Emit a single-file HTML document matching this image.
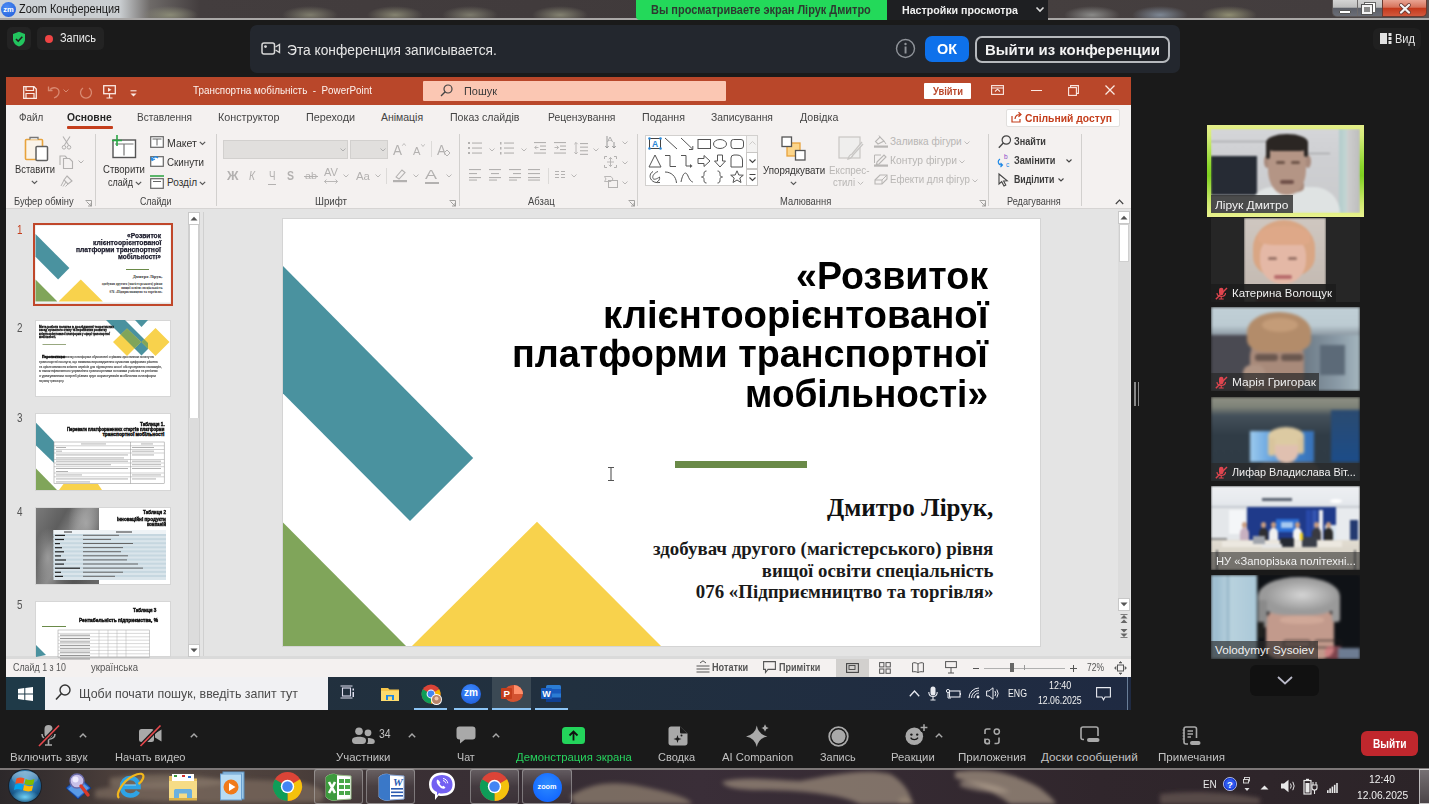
<!DOCTYPE html>
<html><head><meta charset="utf-8">
<style>
*{margin:0;padding:0;box-sizing:border-box}
html,body{width:1429px;height:804px;overflow:hidden;background:#1a1a1a;font-family:"Liberation Sans",sans-serif;position:relative}
.a{position:absolute;display:block}
.t{position:absolute;white-space:pre}
svg.a{overflow:visible}
</style></head><body>

<div class="a" style="left:0px;top:20px;width:1429px;height:748px;background:#1a1a1a"></div>
<div class="a" style="left:0px;top:0px;width:1429px;height:19px;background:radial-gradient(ellipse 28px 9px at 170px 15px,#8a8a76,rgba(0,0,0,0)),radial-gradient(ellipse 28px 9px at 310px 15px,#7e7c6c,rgba(0,0,0,0)),radial-gradient(ellipse 28px 9px at 395px 15px,#858370,rgba(0,0,0,0)),radial-gradient(ellipse 28px 9px at 470px 15px,#7c7a6c,rgba(0,0,0,0)),radial-gradient(ellipse 28px 9px at 560px 15px,#838170,rgba(0,0,0,0)),radial-gradient(ellipse 28px 9px at 1092px 15px,#8a8a88,rgba(0,0,0,0)),radial-gradient(ellipse 28px 9px at 1160px 15px,#7d8794,rgba(0,0,0,0)),radial-gradient(ellipse 28px 9px at 1229px 15px,#8f8d72,rgba(0,0,0,0)),linear-gradient(90deg,#cfd3d6 0,#c9cdd0 120px,#6e6a68 150px,#433d3e 200px,#403a3b 700px,#453f3f 1040px,#433d3e 1330px,#5a5555 1429px)"></div>
<div class="a" style="left:0px;top:18px;width:1429px;height:2px;background:#a9a7a6"></div>
<div class="a" style="left:1px;top:2px;width:15px;height:15px;border-radius:50%;background:radial-gradient(circle at 40% 35%,#4f8df5,#1c5ad8)"></div>
<div class="t" style="left:3.20px;top:6.10px;font:700 7.56px/7.56px 'Liberation Sans',sans-serif;color:#fff;">zm</div>
<div class="t" style="left:19.00px;top:3.32px;font:400 12.85px/12.85px 'Liberation Sans',sans-serif;color:#1a1a1a;transform:scaleX(0.8506);transform-origin:0 0;">Zoom Конференция</div>
<div class="a" style="left:636px;top:0px;width:251px;height:20px;background:#23d95a;border-radius:0 0 0 4px"></div>
<div class="t" style="left:651.00px;top:3.83px;font:700 12.01px/12.01px 'Liberation Sans',sans-serif;color:#2d3a30;transform:scaleX(0.9141);transform-origin:0 0;">Вы просматриваете экран Лірук Дмитро</div>
<div class="a" style="left:887px;top:0px;width:161px;height:20px;background:#1e1f22"></div>
<div class="t" style="left:902.00px;top:4.07px;font:700 11.73px/11.73px 'Liberation Sans',sans-serif;color:#f0f0f0;transform:scaleX(0.9078);transform-origin:0 0;">Настройки просмотра</div>
<svg class="a" style="left:1035px;top:6px;" width="10" height="7" viewBox="0 0 10 7"><path d="M1.5 1.5 L5 5 L8.5 1.5" stroke="#ddd" stroke-width="1.6" fill="none"/></svg>
<div class="a" style="left:1332px;top:0px;width:95px;height:17px;border:1px solid #5b5656;border-top:none;border-radius:0 0 5px 5px;background:linear-gradient(180deg,#d4d4d4 0,#bdbdbd 45%,#5c5f68 52%,#6a6d76 100%);overflow:hidden"></div>
<div class="a" style="left:1357px;top:0px;width:1px;height:16px;background:#6d6a6a"></div>
<div class="a" style="left:1382px;top:0px;width:45px;height:17px;border-radius:0 0 5px 0;background:linear-gradient(180deg,#e9a493 0,#d7735c 45%,#c4391c 52%,#d2583d 100%);border:1px solid #6a3a30;border-top:none"></div>
<div class="a" style="left:1339px;top:10px;width:12px;height:4px;background:#fff;border:1px solid #555;border-radius:1px"></div>
<div class="a" style="left:1365px;top:3px;width:10px;height:9px;border:2px solid #fff;outline:1px solid #666"></div>
<div class="a" style="left:1362px;top:5px;width:10px;height:9px;border:2px solid #f4f4f4;background:#8a8a8a;outline:1px solid #555"></div>
<svg class="a" style="left:1397px;top:2px;" width="16" height="13" viewBox="0 0 16 13"><path d="M4 3 L12 10.5 M12 3 L4 10.5" stroke="#6a3a34" stroke-width="3.8" stroke-linecap="round"/><path d="M4 3 L12 10.5 M12 3 L4 10.5" stroke="#f4f4f4" stroke-width="2.3" stroke-linecap="round"/></svg>
<div class="a" style="left:7px;top:27px;width:24px;height:23px;background:#232323;border-radius:5px"></div>
<svg class="a" style="left:12px;top:31px;" width="14" height="16" viewBox="0 0 14 16"><path d="M7 0.8 L13 3 L13 8 C13 12 10 14.5 7 15.5 C4 14.5 1 12 1 8 L1 3 Z" fill="#22c55e"/><path d="M4 8 L6.2 10.2 L10.3 5.8" stroke="#1f1f1f" stroke-width="1.6" fill="none"/></svg>
<div class="a" style="left:37px;top:27px;width:67px;height:23px;background:#232323;border-radius:5px"></div>
<div class="a" style="left:44.5px;top:34.5px;width:8px;height:8px;background:#ef4444;border-radius:50%"></div>
<div class="t" style="left:60.00px;top:32.95px;font:400 11.87px/11.87px 'Liberation Sans',sans-serif;color:#ececec;transform:scaleX(0.9242);transform-origin:0 0;">Запись</div>
<div class="a" style="left:250px;top:25px;width:930px;height:48px;background:#23272e;border-radius:7px"></div>
<svg class="a" style="left:261px;top:42px;" width="20" height="14" viewBox="0 0 20 14"><rect x="1" y="1" width="12.5" height="11" rx="2" stroke="#d8d8d8" stroke-width="1.5" fill="none"/><circle cx="4.5" cy="4.6" r="1.4" fill="#d8d8d8"/><path d="M14.5 5 L18.5 2.5 L18.5 10.5 L14.5 8" stroke="#d8d8d8" stroke-width="1.4" fill="none"/></svg>
<div class="t" style="left:287.00px;top:42.89px;font:400 14.66px/14.66px 'Liberation Sans',sans-serif;color:#e6e6e6;transform:scaleX(0.9390);transform-origin:0 0;">Эта конференция записывается.</div>
<svg class="a" style="left:895px;top:38px;" width="21" height="21" viewBox="0 0 21 21"><circle cx="10.5" cy="10.5" r="9" stroke="#8f9399" stroke-width="1.4" fill="none"/><rect x="9.6" y="8.5" width="1.9" height="7" fill="#8f9399"/><circle cx="10.5" cy="6" r="1.2" fill="#8f9399"/></svg>
<div class="a" style="left:925px;top:36px;width:44px;height:26px;background:#0e71eb;border-radius:7px"></div>
<div class="t" style="left:937.00px;top:41.00px;font:700 15.36px/15.36px 'Liberation Sans',sans-serif;color:#fff;transform:scaleX(0.9377);transform-origin:0 0;">ОК</div>
<div class="a" style="left:975px;top:36px;width:195px;height:27px;border:2px solid #b6b9bd;border-radius:7px;background:#1f2227"></div>
<div class="t" style="left:985.00px;top:41.50px;font:700 15.36px/15.36px 'Liberation Sans',sans-serif;color:#f2f2f2;transform:scaleX(0.9737);transform-origin:0 0;">Выйти из конференции</div>
<div class="a" style="left:1373px;top:28px;width:48px;height:22px;background:#202020;border-radius:6px"></div>
<svg class="a" style="left:1380px;top:33px;" width="12" height="11" viewBox="0 0 12 11"><rect x="0" y="0" width="7" height="11" fill="#e2e2e2"/><rect x="8.5" y="0" width="3" height="3" fill="#e2e2e2"/><rect x="8.5" y="4" width="3" height="3" fill="#e2e2e2"/><rect x="8.5" y="8" width="3" height="3" fill="#e2e2e2"/></svg>
<div class="t" style="left:1395.00px;top:32.83px;font:400 12.01px/12.01px 'Liberation Sans',sans-serif;color:#e8e8e8;transform:scaleX(0.9204);transform-origin:0 0;">Вид</div>
<div class="a" style="left:6px;top:77px;width:1125px;height:633px;background:#f4f1f0"></div>
<div class="a" style="left:6px;top:77px;width:1125px;height:28px;background:#b9472a"></div>
<svg class="a" style="left:23px;top:86px;" width="14" height="13" viewBox="0 0 14 13"><path d="M0.7 0.7 H11 L13.3 3 V12.3 H0.7 Z" stroke="#fbe9e3" stroke-width="1.3" fill="none"/><path d="M3 0.7 V4.5 H10.5 V0.7" stroke="#fbe9e3" stroke-width="1.2" fill="none"/><path d="M3 12.3 V7.5 H11 V12.3" stroke="#fbe9e3" stroke-width="1.2" fill="none"/></svg>
<svg class="a" style="left:47px;top:85px;" width="14" height="14" viewBox="0 0 14 14"><path d="M3 4.5 C6 1.5 12 2.5 12 7 C12 10 9.5 12 7 13" stroke="#d98a72" stroke-width="1.3" fill="none"/><path d="M1.5 1.5 V5.5 H5.5" stroke="#d98a72" stroke-width="1.3" fill="none"/></svg>
<svg class="a" style="left:63px;top:89px;" width="6" height="4" viewBox="0 0 6 4"><path d="M0.5 0.5 L3 3 L5.5 0.5" stroke="#d98a72" stroke-width="1" fill="none"/></svg>
<svg class="a" style="left:79px;top:85px;" width="14" height="14" viewBox="0 0 14 14"><path d="M10 3 A5.5 5.5 0 1 1 4 3" stroke="#d98a72" stroke-width="1.3" fill="none"/></svg>
<svg class="a" style="left:103px;top:85px;" width="13" height="14" viewBox="0 0 13 14"><rect x="0.7" y="0.7" width="11.6" height="8" stroke="#fbe9e3" stroke-width="1.3" fill="none"/><path d="M5 2.7 L8.5 4.7 L5 6.7 Z" fill="#fbe9e3"/><path d="M6.5 8.7 V13 M3.5 13 H9.5" stroke="#fbe9e3" stroke-width="1.2"/></svg>
<svg class="a" style="left:130px;top:90px;" width="7" height="9" viewBox="0 0 7 9"><path d="M0.5 0.8 H6.5" stroke="#fbe9e3" stroke-width="1.1"/><path d="M0.5 3.5 L3.5 6.5 L6.5 3.5 Z" fill="#fbe9e3"/></svg>
<div class="t" style="left:193.00px;top:85.01px;font:400 10.61px/10.61px 'Liberation Sans',sans-serif;color:#fdf3ef;transform:scaleX(0.9291);transform-origin:0 0;">Транспортна мобільність  -  PowerPoint</div>
<div class="a" style="left:423px;top:81px;width:303px;height:20px;background:#fbc7b3;border-radius:1px"></div>
<svg class="a" style="left:440px;top:84px;" width="13" height="13" viewBox="0 0 13 13"><circle cx="8" cy="5" r="4" stroke="#444" stroke-width="1.2" fill="none"/><path d="M5.2 7.8 L1 12" stroke="#444" stroke-width="1.3"/></svg>
<div class="t" style="left:464.00px;top:86.01px;font:400 10.61px/10.61px 'Liberation Sans',sans-serif;color:#3a3a3a;transform:scaleX(1.0313);transform-origin:0 0;">Пошук</div>
<div class="a" style="left:924px;top:83px;width:47px;height:16px;background:#fff;border-radius:1px"></div>
<div class="t" style="left:932.50px;top:86.01px;font:700 10.61px/10.61px 'Liberation Sans',sans-serif;color:#b9472a;transform:scaleX(0.8843);transform-origin:0 0;">Увійти</div>
<svg class="a" style="left:991px;top:85px;" width="13" height="10" viewBox="0 0 13 10"><rect x="0.6" y="0.6" width="11.8" height="8.8" stroke="#fbe9e3" stroke-width="1.1" fill="none"/><path d="M0.6 3 H12.4" stroke="#fbe9e3" stroke-width="1"/><path d="M4 6.5 L6.5 4.2 L9 6.5" stroke="#fbe9e3" stroke-width="1.1" fill="none"/></svg>
<div class="a" style="left:1031px;top:90px;width:11px;height:1px;background:#fbe9e3"></div>
<svg class="a" style="left:1068px;top:85px;" width="11" height="11" viewBox="0 0 11 11"><rect x="0.6" y="2.6" width="7.8" height="7.8" stroke="#fbe9e3" stroke-width="1.1" fill="none"/><path d="M2.6 2.6 V0.6 H10.4 V8.4 H8.4" stroke="#fbe9e3" stroke-width="1.1" fill="none"/></svg>
<svg class="a" style="left:1105px;top:85px;" width="10" height="10" viewBox="0 0 10 10"><path d="M0.5 0.5 L9.5 9.5 M9.5 0.5 L0.5 9.5" stroke="#fbe9e3" stroke-width="1.3"/></svg>
<div class="t" style="left:18.80px;top:113.13px;font:400 10.47px/10.47px 'Liberation Sans',sans-serif;color:#444;transform:scaleX(0.9397);transform-origin:0 0;">Файл</div>
<div class="t" style="left:67.30px;top:113.13px;font:700 10.47px/10.47px 'Liberation Sans',sans-serif;color:#262626;transform:scaleX(0.9870);transform-origin:0 0;">Основне</div>
<div class="t" style="left:136.90px;top:113.13px;font:400 10.47px/10.47px 'Liberation Sans',sans-serif;color:#444;transform:scaleX(0.9610);transform-origin:0 0;">Вставлення</div>
<div class="t" style="left:218.00px;top:113.13px;font:400 10.47px/10.47px 'Liberation Sans',sans-serif;color:#444;transform:scaleX(1.0297);transform-origin:0 0;">Конструктор</div>
<div class="t" style="left:306.00px;top:113.13px;font:400 10.47px/10.47px 'Liberation Sans',sans-serif;color:#444;transform:scaleX(1.0326);transform-origin:0 0;">Переходи</div>
<div class="t" style="left:381.00px;top:113.13px;font:400 10.47px/10.47px 'Liberation Sans',sans-serif;color:#444;">Анімація</div>
<div class="t" style="left:450.00px;top:113.13px;font:400 10.47px/10.47px 'Liberation Sans',sans-serif;color:#444;transform:scaleX(1.0128);transform-origin:0 0;">Показ слайдів</div>
<div class="t" style="left:547.50px;top:113.13px;font:400 10.47px/10.47px 'Liberation Sans',sans-serif;color:#444;transform:scaleX(0.9886);transform-origin:0 0;">Рецензування</div>
<div class="t" style="left:642.00px;top:113.13px;font:400 10.47px/10.47px 'Liberation Sans',sans-serif;color:#444;transform:scaleX(1.0165);transform-origin:0 0;">Подання</div>
<div class="t" style="left:711.00px;top:113.13px;font:400 10.47px/10.47px 'Liberation Sans',sans-serif;color:#444;transform:scaleX(0.9894);transform-origin:0 0;">Записування</div>
<div class="t" style="left:799.60px;top:113.13px;font:400 10.47px/10.47px 'Liberation Sans',sans-serif;color:#444;transform:scaleX(1.0191);transform-origin:0 0;">Довідка</div>
<div class="a" style="left:67px;top:125.5px;width:46px;height:3px;background:#c43e1c;border-radius:1px"></div>
<div class="a" style="left:1006px;top:109px;width:114px;height:18px;background:#fff;border:1px solid #e1dfdd;border-radius:2px"></div>
<svg class="a" style="left:1011px;top:111px;" width="12" height="12" viewBox="0 0 12 12"><path d="M1 5 V11 H9 V8" stroke="#c43e1c" stroke-width="1.2" fill="none"/><path d="M4 8 C4 4.5 6.5 3.5 9.5 3.5 M7.5 1.2 L10 3.5 L7.5 5.8" stroke="#c43e1c" stroke-width="1.2" fill="none"/></svg>
<div class="t" style="left:1025.00px;top:113.01px;font:700 10.61px/10.61px 'Liberation Sans',sans-serif;color:#c43e1c;transform:scaleX(0.9724);transform-origin:0 0;">Спільний доступ</div>
<div class="a" style="left:6px;top:208px;width:1125px;height:1px;background:#d6d4d3"></div>
<div class="a" style="left:6px;top:209px;width:1125px;height:450px;background:#e4e4e4"></div>
<div class="a" style="left:94.5px;top:134px;width:1px;height:72px;background:#d2d0ce"></div>
<div class="a" style="left:216.2px;top:134px;width:1px;height:72px;background:#d2d0ce"></div>
<div class="a" style="left:459px;top:134px;width:1px;height:72px;background:#d2d0ce"></div>
<div class="a" style="left:637px;top:134px;width:1px;height:72px;background:#d2d0ce"></div>
<div class="a" style="left:988.4px;top:134px;width:1px;height:72px;background:#d2d0ce"></div>
<div class="a" style="left:1080.8px;top:134px;width:1px;height:72px;background:#d2d0ce"></div>
<div class="t" style="left:13.70px;top:197.29px;font:400 10.06px/10.06px 'Liberation Sans',sans-serif;color:#444;transform:scaleX(0.9269);transform-origin:0 0;">Буфер обміну</div>
<div class="t" style="left:139.60px;top:197.29px;font:400 10.06px/10.06px 'Liberation Sans',sans-serif;color:#444;transform:scaleX(0.8765);transform-origin:0 0;">Слайди</div>
<div class="t" style="left:314.80px;top:197.29px;font:400 10.06px/10.06px 'Liberation Sans',sans-serif;color:#444;transform:scaleX(0.9702);transform-origin:0 0;">Шрифт</div>
<div class="t" style="left:528.00px;top:197.29px;font:400 10.06px/10.06px 'Liberation Sans',sans-serif;color:#444;transform:scaleX(0.9465);transform-origin:0 0;">Абзац</div>
<div class="t" style="left:780.40px;top:197.29px;font:400 10.06px/10.06px 'Liberation Sans',sans-serif;color:#444;transform:scaleX(0.9350);transform-origin:0 0;">Малювання</div>
<div class="t" style="left:1007.40px;top:197.29px;font:400 10.06px/10.06px 'Liberation Sans',sans-serif;color:#444;transform:scaleX(0.9093);transform-origin:0 0;">Редагування</div>
<svg class="a" style="left:85px;top:200px;" width="7" height="7" viewBox="0 0 7 7"><path d="M0.5 0.5 H6.5 V6.5" stroke="#9a9896" stroke-width="0.9" fill="none"/><path d="M1.5 1.5 L6 6" stroke="#9a9896" stroke-width="0.9"/><path d="M3 6 H6 V3" stroke="#9a9896" stroke-width="0.9" fill="none"/></svg>
<svg class="a" style="left:449px;top:200px;" width="7" height="7" viewBox="0 0 7 7"><path d="M0.5 0.5 H6.5 V6.5" stroke="#9a9896" stroke-width="0.9" fill="none"/><path d="M1.5 1.5 L6 6" stroke="#9a9896" stroke-width="0.9"/><path d="M3 6 H6 V3" stroke="#9a9896" stroke-width="0.9" fill="none"/></svg>
<svg class="a" style="left:628px;top:200px;" width="7" height="7" viewBox="0 0 7 7"><path d="M0.5 0.5 H6.5 V6.5" stroke="#9a9896" stroke-width="0.9" fill="none"/><path d="M1.5 1.5 L6 6" stroke="#9a9896" stroke-width="0.9"/><path d="M3 6 H6 V3" stroke="#9a9896" stroke-width="0.9" fill="none"/></svg>
<svg class="a" style="left:979px;top:200px;" width="7" height="7" viewBox="0 0 7 7"><path d="M0.5 0.5 H6.5 V6.5" stroke="#9a9896" stroke-width="0.9" fill="none"/><path d="M1.5 1.5 L6 6" stroke="#9a9896" stroke-width="0.9"/><path d="M3 6 H6 V3" stroke="#9a9896" stroke-width="0.9" fill="none"/></svg>
<svg class="a" style="left:1115px;top:199px;" width="9" height="6" viewBox="0 0 9 6"><path d="M0.8 5 L4.5 1.2 L8.2 5" stroke="#444" stroke-width="1.2" fill="none"/></svg>
<svg class="a" style="left:24px;top:136px;" width="25" height="26" viewBox="0 0 25 26"><rect x="1.5" y="3.5" width="17" height="20" rx="1" fill="#fbf4ea" stroke="#e8a33c" stroke-width="1.6"/><path d="M6 3.5 V1.5 H14 V3.5" stroke="#777" stroke-width="1.3" fill="#fff"/><rect x="12" y="10.5" width="11.5" height="14" rx="1" fill="#fff" stroke="#606060" stroke-width="1.5"/></svg>
<div class="t" style="left:14.50px;top:165.39px;font:400 10.06px/10.06px 'Liberation Sans',sans-serif;color:#333231;transform:scaleX(0.9302);transform-origin:0 0;">Вставити</div>
<svg class="a" style="left:31px;top:180px;" width="7" height="5" viewBox="0 0 7 5"><path d="M0.8 0.8 L3.5 3.5 L6.2 0.8" stroke="#555" stroke-width="1.1" fill="none"/></svg>
<svg class="a" style="left:62px;top:136px;" width="9" height="14" viewBox="0 0 9 14"><path d="M1 0.5 L6.5 9 M8 0.5 L2.5 9" stroke="#b3b1b0" stroke-width="1.1"/><circle cx="2" cy="11.3" r="1.8" stroke="#b3b1b0" stroke-width="1" fill="none"/><circle cx="7" cy="11.3" r="1.8" stroke="#b3b1b0" stroke-width="1" fill="none"/></svg>
<svg class="a" style="left:59px;top:155px;" width="15" height="14" viewBox="0 0 15 14"><path d="M1 10 V1 H6 L8 3" stroke="#b3b1b0" stroke-width="1.1" fill="none"/><path d="M4.5 3.5 H10.5 L13.5 6.5 V13.5 H4.5 Z" stroke="#b3b1b0" stroke-width="1.1" fill="none"/></svg>
<svg class="a" style="left:78px;top:160px;" width="6" height="4" viewBox="0 0 6 4"><path d="M0.5 0.5 L3 3 L5.5 0.5" stroke="#b3b1b0" stroke-width="1" fill="none"/></svg>
<svg class="a" style="left:60px;top:175px;" width="13" height="12" viewBox="0 0 13 12"><path d="M7 1 L12 6 L8 9 L4 5 Z" stroke="#b3b1b0" stroke-width="1.1" fill="none"/><path d="M4 5 L1 11 M6 7 L3 11.5 M8 9 L5.5 11.5" stroke="#b3b1b0" stroke-width="1"/></svg>
<svg class="a" style="left:110px;top:134px;" width="27" height="25" viewBox="0 0 27 25"><rect x="3" y="6" width="22.5" height="17.5" stroke="#555" stroke-width="1.4" fill="#fff"/><path d="M5 10 H23.5 M14 10 V21.5" stroke="#777" stroke-width="1.2"/><path d="M2 6.5 H12 M7 1 V12" stroke="#28a745" stroke-width="1.6"/></svg>
<div class="t" style="left:103.30px;top:165.49px;font:400 10.06px/10.06px 'Liberation Sans',sans-serif;color:#333231;transform:scaleX(0.9519);transform-origin:0 0;">Створити</div>
<div class="t" style="left:107.60px;top:178.29px;font:400 10.06px/10.06px 'Liberation Sans',sans-serif;color:#333231;transform:scaleX(0.8937);transform-origin:0 0;">слайд</div>
<svg class="a" style="left:135px;top:181px;" width="7" height="5" viewBox="0 0 7 5"><path d="M0.8 0.8 L3.5 3.5 L6.2 0.8" stroke="#555" stroke-width="1.1" fill="none"/></svg>
<svg class="a" style="left:150px;top:136px;" width="14" height="12" viewBox="0 0 14 12"><rect x="0.7" y="0.7" width="12.6" height="10.6" stroke="#666" stroke-width="1.2" fill="#fff"/><path d="M2.5 3 H11.5 M7 3 V9.5" stroke="#666" stroke-width="1"/></svg>
<svg class="a" style="left:150px;top:155px;" width="14" height="12" viewBox="0 0 14 12"><rect x="0.7" y="1.7" width="12.6" height="9.6" stroke="#666" stroke-width="1.2" fill="#fff"/><path d="M2 5 C3 1.5 6 1 8 3" stroke="#1e88e5" stroke-width="1.3" fill="none"/><path d="M1 2 L2 5.5 L5 4" stroke="#1e88e5" stroke-width="1.1" fill="none"/></svg>
<svg class="a" style="left:150px;top:175px;" width="14" height="14" viewBox="0 0 14 14"><rect x="0.7" y="3.7" width="12.6" height="9.6" stroke="#666" stroke-width="1.2" fill="#fff"/><rect x="0" y="0" width="14" height="2" fill="#5bb56a"/><path d="M3 6.5 H11" stroke="#666" stroke-width="1"/></svg>
<div class="t" style="left:167.00px;top:138.69px;font:400 10.06px/10.06px 'Liberation Sans',sans-serif;color:#333231;transform:scaleX(1.0541);transform-origin:0 0;">Макет</div>
<div class="t" style="left:167.00px;top:158.49px;font:400 10.06px/10.06px 'Liberation Sans',sans-serif;color:#333231;transform:scaleX(0.9716);transform-origin:0 0;">Скинути</div>
<div class="t" style="left:167.00px;top:178.49px;font:400 10.06px/10.06px 'Liberation Sans',sans-serif;color:#333231;">Розділ</div>
<svg class="a" style="left:199px;top:141px;" width="7" height="5" viewBox="0 0 7 5"><path d="M0.8 0.8 L3.5 3.5 L6.2 0.8" stroke="#555" stroke-width="1.1" fill="none"/></svg>
<svg class="a" style="left:199px;top:181px;" width="7" height="5" viewBox="0 0 7 5"><path d="M0.8 0.8 L3.5 3.5 L6.2 0.8" stroke="#555" stroke-width="1.1" fill="none"/></svg>
<div class="a" style="left:223px;top:140px;width:125px;height:19px;background:#e1dfdd;border:1px solid #d2d0ce"></div>
<div class="a" style="left:350px;top:140px;width:38px;height:19px;background:#e1dfdd;border:1px solid #d2d0ce"></div>
<svg class="a" style="left:340px;top:148px;" width="6" height="4" viewBox="0 0 6 4"><path d="M0.5 0.5 L3 3 L5.5 0.5" stroke="#aaa" stroke-width="0.9" fill="none"/></svg>
<svg class="a" style="left:380px;top:148px;" width="6" height="4" viewBox="0 0 6 4"><path d="M0.5 0.5 L3 3 L5.5 0.5" stroke="#aaa" stroke-width="0.9" fill="none"/></svg>
<div class="t" style="left:392.50px;top:143.68px;font:400 13.97px/13.97px 'Liberation Sans',sans-serif;color:#b3b1b0;transform:scaleX(0.9661);transform-origin:0 0;">A</div>
<svg class="a" style="left:402px;top:143px;" width="4" height="3" viewBox="0 0 4 3"><path d="M0.3 2.7 L2 0.5 L3.7 2.7" stroke="#b3b1b0" stroke-width="0.8" fill="none"/></svg>
<div class="t" style="left:413.00px;top:145.54px;font:400 11.17px/11.17px 'Liberation Sans',sans-serif;color:#b3b1b0;transform:scaleX(1.0063);transform-origin:0 0;">A</div>
<svg class="a" style="left:421px;top:144px;" width="4" height="3" viewBox="0 0 4 3"><path d="M0.3 0.3 L2 2.5 L3.7 0.3" stroke="#b3b1b0" stroke-width="0.8" fill="none"/></svg>
<div class="a" style="left:431px;top:141px;width:1px;height:16px;background:#dcdad8"></div>
<div class="t" style="left:437.00px;top:143.68px;font:400 13.97px/13.97px 'Liberation Sans',sans-serif;color:#b3b1b0;transform:scaleX(0.9661);transform-origin:0 0;">A</div>
<svg class="a" style="left:443px;top:149px;" width="8" height="7" viewBox="0 0 8 7"><path d="M1 4 L4 1 L7 4 L4 7 Z" stroke="#b3b1b0" stroke-width="1" fill="none"/></svg>
<div class="t" style="left:226.50px;top:169.83px;font:700 12.01px/12.01px 'Liberation Sans',sans-serif;color:#b3b1b0;transform:scaleX(1.0592);transform-origin:0 0;">Ж</div>
<div class="t" style="left:249.00px;top:169.83px;font:400 12.01px/12.01px 'Liberation Sans',sans-serif;color:#b3b1b0;transform:scaleX(0.8573);transform-origin:0 0;font-style:italic;">К</div>
<div class="t" style="left:268.50px;top:169.83px;font:400 12.01px/12.01px 'Liberation Sans',sans-serif;color:#b3b1b0;transform:scaleX(0.8119);transform-origin:0 0;">Ч</div>
<div class="t" style="left:287.00px;top:169.83px;font:700 12.01px/12.01px 'Liberation Sans',sans-serif;color:#b3b1b0;transform:scaleX(0.8737);transform-origin:0 0;">S</div>
<div class="a" style="left:267.5px;top:184px;width:8px;height:1px;background:#b3b1b0"></div>
<div class="t" style="left:305.00px;top:171.22px;font:400 9.78px/9.78px 'Liberation Sans',sans-serif;color:#b3b1b0;transform:scaleX(1.1035);transform-origin:0 0;">ab</div>
<div class="a" style="left:304px;top:176px;width:14px;height:1px;background:#b3b1b0"></div>
<div class="t" style="left:324.00px;top:168.13px;font:400 10.47px/10.47px 'Liberation Sans',sans-serif;color:#b3b1b0;transform:scaleX(1.0609);transform-origin:0 0;">AV</div>
<svg class="a" style="left:324px;top:179px;" width="14" height="5" viewBox="0 0 14 5"><path d="M0.5 2.5 H13.5 M2.5 0.5 L0.5 2.5 L2.5 4.5 M11.5 0.5 L13.5 2.5 L11.5 4.5" stroke="#b3b1b0" stroke-width="0.9" fill="none"/></svg>
<div class="t" style="left:356.00px;top:170.54px;font:400 11.17px/11.17px 'Liberation Sans',sans-serif;color:#b3b1b0;transform:scaleX(1.0243);transform-origin:0 0;">Aa</div>
<div class="a" style="left:386px;top:168px;width:1px;height:16px;background:#dcdad8"></div>
<svg class="a" style="left:393px;top:168px;" width="14" height="14" viewBox="0 0 14 14"><path d="M3 9 L9 2 L12 4.5 L6 11 Z" stroke="#b3b1b0" stroke-width="1.1" fill="none"/><rect x="0" y="12" width="14" height="2.2" fill="#b3b1b0"/></svg>
<div class="t" style="left:425.00px;top:169.36px;font:400 12.57px/12.57px 'Liberation Sans',sans-serif;color:#b3b1b0;transform:scaleX(1.4312);transform-origin:0 0;">A</div>
<div class="a" style="left:424.5px;top:181.5px;width:14px;height:2.2px;background:#b3b1b0"></div>
<svg class="a" style="left:343px;top:174px;" width="6" height="4" viewBox="0 0 6 4"><path d="M0.5 0.5 L3 3 L5.5 0.5" stroke="#b3b1b0" stroke-width="0.9" fill="none"/></svg>
<svg class="a" style="left:375px;top:174px;" width="6" height="4" viewBox="0 0 6 4"><path d="M0.5 0.5 L3 3 L5.5 0.5" stroke="#b3b1b0" stroke-width="0.9" fill="none"/></svg>
<svg class="a" style="left:413px;top:174px;" width="6" height="4" viewBox="0 0 6 4"><path d="M0.5 0.5 L3 3 L5.5 0.5" stroke="#b3b1b0" stroke-width="0.9" fill="none"/></svg>
<svg class="a" style="left:446px;top:174px;" width="6" height="4" viewBox="0 0 6 4"><path d="M0.5 0.5 L3 3 L5.5 0.5" stroke="#b3b1b0" stroke-width="0.9" fill="none"/></svg>
<svg class="a" style="left:468px;top:142px;" width="14" height="13" viewBox="0 0 14 13"><rect x="0" y="0" width="2" height="2" fill="#b3b1b0"/><rect x="4" y="0.5" width="10" height="1.1" fill="#b3b1b0"/><rect x="0" y="5" width="2" height="2" fill="#b3b1b0"/><rect x="4" y="5.5" width="10" height="1.1" fill="#b3b1b0"/><rect x="0" y="10" width="2" height="2" fill="#b3b1b0"/><rect x="4" y="10.5" width="10" height="1.1" fill="#b3b1b0"/></svg>
<svg class="a" style="left:500px;top:142px;" width="14" height="13" viewBox="0 0 14 13"><rect x="0" y="0" width="1.5" height="2.5" fill="#b3b1b0"/><rect x="4" y="0.5" width="10" height="1.1" fill="#b3b1b0"/><rect x="0" y="5" width="1.5" height="2.5" fill="#b3b1b0"/><rect x="4" y="5.5" width="10" height="1.1" fill="#b3b1b0"/><rect x="0" y="10" width="1.5" height="2.5" fill="#b3b1b0"/><rect x="4" y="10.5" width="10" height="1.1" fill="#b3b1b0"/></svg>
<svg class="a" style="left:534px;top:142px;" width="13" height="12" viewBox="0 0 13 12"><rect x="0" y="0" width="12" height="1.1" fill="#b3b1b0"/><rect x="6" y="3.5" width="6" height="1.1" fill="#b3b1b0"/><rect x="6" y="7" width="6" height="1.1" fill="#b3b1b0"/><rect x="0" y="10.5" width="12" height="1.1" fill="#b3b1b0"/><path d="M4.5 5.5 H0.8 M2.5 3.7 L0.8 5.5 L2.5 7.3" stroke="#b3b1b0" stroke-width="0.9" fill="none"/></svg>
<svg class="a" style="left:554px;top:142px;" width="13" height="12" viewBox="0 0 13 12"><rect x="0" y="0" width="12" height="1.1" fill="#b3b1b0"/><rect x="6" y="3.5" width="6" height="1.1" fill="#b3b1b0"/><rect x="6" y="7" width="6" height="1.1" fill="#b3b1b0"/><rect x="0" y="10.5" width="12" height="1.1" fill="#b3b1b0"/><path d="M0.5 5.5 H4.5 M2.8 3.7 L4.5 5.5 L2.8 7.3" stroke="#b3b1b0" stroke-width="0.9" fill="none"/></svg>
<svg class="a" style="left:574px;top:142px;" width="14" height="13" viewBox="0 0 14 13"><path d="M2 0.5 V12 M0.3 2.2 L2 0.5 L3.7 2.2 M0.3 10.3 L2 12 L3.7 10.3" stroke="#b3b1b0" stroke-width="0.9" fill="none"/><rect x="6" y="1.0" width="8" height="1.1" fill="#b3b1b0"/><rect x="6" y="4.6" width="8" height="1.1" fill="#b3b1b0"/><rect x="6" y="8.2" width="8" height="1.1" fill="#b3b1b0"/><rect x="6" y="11.8" width="8" height="1.1" fill="#b3b1b0"/></svg>
<svg class="a" style="left:489px;top:148px;" width="6" height="4" viewBox="0 0 6 4"><path d="M0.5 0.5 L3 3 L5.5 0.5" stroke="#b3b1b0" stroke-width="0.9" fill="none"/></svg>
<svg class="a" style="left:521px;top:148px;" width="6" height="4" viewBox="0 0 6 4"><path d="M0.5 0.5 L3 3 L5.5 0.5" stroke="#b3b1b0" stroke-width="0.9" fill="none"/></svg>
<svg class="a" style="left:593px;top:148px;" width="6" height="4" viewBox="0 0 6 4"><path d="M0.5 0.5 L3 3 L5.5 0.5" stroke="#b3b1b0" stroke-width="0.9" fill="none"/></svg>
<svg class="a" style="left:605px;top:136px;" width="13" height="14" viewBox="0 0 13 14"><path d="M2 0 V12 M0.3 10 L2 12 L3.7 10 M9 6 V12 M7.3 10 L9 12 L10.7 10" stroke="#999" stroke-width="1" fill="none"/></svg>
<div class="t" style="left:606.50px;top:136.00px;font:400 7.68px/7.68px 'Liberation Sans',sans-serif;color:#aaa;transform:scaleX(1.1710);transform-origin:0 0;">A</div>
<svg class="a" style="left:604px;top:156px;" width="13" height="12" viewBox="0 0 13 12"><path d="M0.5 3 V0.5 H3 M10 0.5 H12.5 V3 M12.5 9 V11.5 H10 M3 11.5 H0.5 V9" stroke="#b3b1b0" stroke-width="1" fill="none"/><path d="M6.5 1.5 V10.5 M4.8 3.2 L6.5 1.5 L8.2 3.2 M4.8 8.8 L6.5 10.5 L8.2 8.8 M3 6 H10" stroke="#b3b1b0" stroke-width="0.9" fill="none"/></svg>
<svg class="a" style="left:604px;top:176px;" width="14" height="12" viewBox="0 0 14 12"><path d="M0.5 0.5 H7 L9 3 L7 5.5 H0.5 L2 3 Z" fill="none" stroke="#b3b1b0" stroke-width="0.9"/><rect x="4.5" y="4.5" width="9" height="7" fill="none" stroke="#b3b1b0" stroke-width="1"/></svg>
<svg class="a" style="left:622px;top:141px;" width="6" height="4" viewBox="0 0 6 4"><path d="M0.5 0.5 L3 3 L5.5 0.5" stroke="#b3b1b0" stroke-width="0.9" fill="none"/></svg>
<svg class="a" style="left:622px;top:161px;" width="6" height="4" viewBox="0 0 6 4"><path d="M0.5 0.5 L3 3 L5.5 0.5" stroke="#b3b1b0" stroke-width="0.9" fill="none"/></svg>
<svg class="a" style="left:622px;top:181px;" width="6" height="4" viewBox="0 0 6 4"><path d="M0.5 0.5 L3 3 L5.5 0.5" stroke="#b3b1b0" stroke-width="0.9" fill="none"/></svg>
<svg class="a" style="left:469px;top:169px;" width="13" height="12" viewBox="0 0 13 12"><rect x="0" y="0" width="12" height="1.1" fill="#b3b1b0"/><rect x="0" y="4" width="8" height="1.1" fill="#b3b1b0"/><rect x="0" y="8" width="12" height="1.1" fill="#b3b1b0"/><rect x="0" y="10.5" width="8" height="1.1" fill="#b3b1b0"/></svg>
<svg class="a" style="left:489px;top:169px;" width="13" height="12" viewBox="0 0 13 12"><rect x="0" y="0" width="12" height="1.1" fill="#b3b1b0"/><rect x="2" y="4" width="8" height="1.1" fill="#b3b1b0"/><rect x="0" y="8" width="12" height="1.1" fill="#b3b1b0"/><rect x="0" y="10.5" width="8" height="1.1" fill="#b3b1b0"/></svg>
<svg class="a" style="left:509px;top:169px;" width="13" height="12" viewBox="0 0 13 12"><rect x="0" y="0" width="12" height="1.1" fill="#b3b1b0"/><rect x="4" y="4" width="8" height="1.1" fill="#b3b1b0"/><rect x="0" y="8" width="12" height="1.1" fill="#b3b1b0"/><rect x="0" y="10.5" width="8" height="1.1" fill="#b3b1b0"/></svg>
<svg class="a" style="left:528px;top:169px;" width="13" height="12" viewBox="0 0 13 12"><rect x="0" y="0" width="12" height="1.1" fill="#b3b1b0"/><rect x="0" y="4" width="12" height="1.1" fill="#b3b1b0"/><rect x="0" y="8" width="12" height="1.1" fill="#b3b1b0"/><rect x="0" y="10.5" width="12" height="1.1" fill="#b3b1b0"/></svg>
<div class="a" style="left:548px;top:168px;width:1px;height:16px;background:#dcdad8"></div>
<svg class="a" style="left:555px;top:171px;" width="11" height="7" viewBox="0 0 11 7"><rect x="0" y="0" width="4" height="1" fill="#b3b1b0"/><rect x="6" y="0" width="4" height="1" fill="#b3b1b0"/><rect x="0" y="3" width="4" height="1" fill="#b3b1b0"/><rect x="6" y="3" width="4" height="1" fill="#b3b1b0"/><rect x="0" y="6" width="4" height="1" fill="#b3b1b0"/><rect x="6" y="6" width="4" height="1" fill="#b3b1b0"/></svg>
<svg class="a" style="left:571px;top:174px;" width="6" height="4" viewBox="0 0 6 4"><path d="M0.5 0.5 L3 3 L5.5 0.5" stroke="#b3b1b0" stroke-width="0.9" fill="none"/></svg>
<div class="a" style="left:645px;top:135px;width:113px;height:51px;background:#fff;border:1px solid #d2d0ce"></div>
<div class="a" style="left:746px;top:135px;width:12px;height:51px;background:#f3f2f1;border:1px solid #d2d0ce"></div>
<div class="a" style="left:746px;top:152px;width:12px;height:17px;background:#fff;border:1px solid #c8c6c4"></div>
<div class="a" style="left:746px;top:169px;width:12px;height:17px;background:#fff;border:1px solid #c8c6c4"></div>
<svg class="a" style="left:749px;top:141px;" width="7" height="4" viewBox="0 0 7 4"><path d="M0.5 3.5 L3.5 0.5 L6.5 3.5" stroke="#c8c6c4" stroke-width="0.9" fill="none"/></svg>
<svg class="a" style="left:749px;top:159px;" width="7" height="4" viewBox="0 0 7 4"><path d="M0.5 0.5 L3.5 3.5 L6.5 0.5" stroke="#444" stroke-width="1.1" fill="none"/></svg>
<svg class="a" style="left:749px;top:174px;" width="7" height="8" viewBox="0 0 7 8"><path d="M0.5 0.5 H6.5" stroke="#444" stroke-width="1"/><path d="M0.5 3.5 L3.5 6.5 L6.5 3.5" stroke="#444" stroke-width="1.1" fill="none"/></svg>
<svg class="a" style="left:647.5px;top:137px;" width="14" height="14" viewBox="0 0 14 14"><rect x="1.5" y="1.5" width="11" height="10" stroke="#444" stroke-width="1" fill="none"/><text x="7" y="10" font-size="8.5" font-weight="700" fill="#2b88d8" text-anchor="middle" font-family="Liberation Sans">A</text><circle cx="1.5" cy="1.5" r="1.3" fill="#2b88d8"/><circle cx="12.5" cy="1.5" r="1.3" fill="#2b88d8"/><circle cx="1.5" cy="11.5" r="1.3" fill="#2b88d8"/><circle cx="12.5" cy="11.5" r="1.3" fill="#2b88d8"/></svg>
<svg class="a" style="left:664.3px;top:137px;" width="14" height="14" viewBox="0 0 14 14"><path d="M1 1 L13 12" stroke="#555" stroke-width="1"/></svg>
<svg class="a" style="left:680.2px;top:137px;" width="14" height="14" viewBox="0 0 14 14"><path d="M1 1 L12.5 12" stroke="#555" stroke-width="1"/><path d="M9 12.5 H12.8 V9" stroke="#555" stroke-width="1" fill="none"/></svg>
<svg class="a" style="left:697px;top:137px;" width="14" height="14" viewBox="0 0 14 14"><rect x="1" y="2.5" width="12.5" height="9" stroke="#555" stroke-width="1" fill="none"/></svg>
<svg class="a" style="left:713px;top:137px;" width="14" height="14" viewBox="0 0 14 14"><ellipse cx="7" cy="7" rx="6.5" ry="4.5" stroke="#555" stroke-width="1" fill="none"/></svg>
<svg class="a" style="left:729.8px;top:137px;" width="14" height="14" viewBox="0 0 14 14"><rect x="1" y="2.5" width="12.5" height="9" rx="2.5" stroke="#555" stroke-width="1" fill="none"/></svg>
<svg class="a" style="left:647.5px;top:153.8px;" width="14" height="14" viewBox="0 0 14 14"><path d="M7 1 L13 13 H1 Z" stroke="#555" stroke-width="1" fill="none"/></svg>
<svg class="a" style="left:664.3px;top:153.8px;" width="14" height="14" viewBox="0 0 14 14"><path d="M1 1.5 H6 V12.5 H12" stroke="#555" stroke-width="1" fill="none"/></svg>
<svg class="a" style="left:680.2px;top:153.8px;" width="14" height="14" viewBox="0 0 14 14"><path d="M1 1.5 H6 V12 H11" stroke="#555" stroke-width="1" fill="none"/><path d="M10 10 L12.5 12 L10 14" fill="#555"/></svg>
<svg class="a" style="left:697px;top:153.8px;" width="14" height="14" viewBox="0 0 14 14"><path d="M1 4.5 H7 V1.5 L13 7 L7 12.5 V9.5 H1 Z" stroke="#555" stroke-width="1" fill="none"/></svg>
<svg class="a" style="left:713px;top:153.8px;" width="14" height="14" viewBox="0 0 14 14"><path d="M4.5 1 H9.5 V7 H12.5 L7 13 L1.5 7 H4.5 Z" stroke="#555" stroke-width="1" fill="none"/></svg>
<svg class="a" style="left:729.8px;top:153.8px;" width="14" height="14" viewBox="0 0 14 14"><path d="M1 13 V4 Q1 1 4 1 H7 Q12 1 12.5 6 V13 Z" stroke="#555" stroke-width="1" fill="none"/></svg>
<svg class="a" style="left:647.5px;top:169.7px;" width="14" height="14" viewBox="0 0 14 14"><path d="M5 1.5 C2 3 1 7 3.5 10 C5 12 8 13 12 12.5 M10 1.5 C6 3 4 6 5 8.5 C6 10 9 9 11.5 7 C12 9 11 11 9 12" stroke="#555" stroke-width="1" fill="none"/></svg>
<svg class="a" style="left:664.3px;top:169.7px;" width="14" height="14" viewBox="0 0 14 14"><path d="M1 2 C7 2 12 6 12.5 13" stroke="#555" stroke-width="1" fill="none"/></svg>
<svg class="a" style="left:680.2px;top:169.7px;" width="14" height="14" viewBox="0 0 14 14"><path d="M1 12 C3 2 6 1 8 6 C10 11 12 12 13 12" stroke="#555" stroke-width="1" fill="none"/></svg>
<svg class="a" style="left:697px;top:169.7px;" width="14" height="14" viewBox="0 0 14 14"><path d="M9.5 1 C7 1 7 2.5 7 4.5 C7 6 6.5 7 4.5 7 C6.5 7 7 8 7 9.5 C7 11.5 7 13 9.5 13" stroke="#555" stroke-width="1" fill="none"/></svg>
<svg class="a" style="left:713px;top:169.7px;" width="14" height="14" viewBox="0 0 14 14"><path d="M4.5 1 C7 1 7 2.5 7 4.5 C7 6 7.5 7 9.5 7 C7.5 7 7 8 7 9.5 C7 11.5 7 13 4.5 13" stroke="#555" stroke-width="1" fill="none"/></svg>
<svg class="a" style="left:729.8px;top:169.7px;" width="14" height="14" viewBox="0 0 14 14"><path d="M7 0.8 L8.8 5 L13.3 5.2 L9.8 8 L11 12.5 L7 10 L3 12.5 L4.2 8 L0.7 5.2 L5.2 5 Z" stroke="#555" stroke-width="1" fill="none"/></svg>
<svg class="a" style="left:781px;top:136px;" width="26" height="25" viewBox="0 0 26 25"><rect x="6" y="7" width="13" height="13" fill="#fcd58a" stroke="#e8a33c" stroke-width="1.3"/><rect x="1" y="1" width="9.5" height="9.5" fill="#fff" stroke="#555" stroke-width="1.3"/><rect x="14.5" y="14.5" width="9.5" height="9.5" fill="#fff" stroke="#555" stroke-width="1.3"/></svg>
<div class="t" style="left:762.80px;top:165.69px;font:400 10.06px/10.06px 'Liberation Sans',sans-serif;color:#333231;transform:scaleX(0.9699);transform-origin:0 0;">Упорядкувати</div>
<svg class="a" style="left:790px;top:181px;" width="7" height="5" viewBox="0 0 7 5"><path d="M0.8 0.8 L3.5 3.5 L6.2 0.8" stroke="#555" stroke-width="1.1" fill="none"/></svg>
<svg class="a" style="left:838px;top:136px;" width="26" height="25" viewBox="0 0 26 25"><rect x="1" y="1" width="21" height="21" fill="#efeeed" stroke="#c8c6c4" stroke-width="1.2"/><path d="M24 6 L14 18 Q11 19 10 23 Q14 22 15 19 L25 8" stroke="#c8c6c4" stroke-width="1.3" fill="#f3f2f1"/></svg>
<div class="t" style="left:829.00px;top:165.69px;font:400 10.06px/10.06px 'Liberation Sans',sans-serif;color:#b8b6b4;transform:scaleX(0.9817);transform-origin:0 0;">Експрес-</div>
<div class="t" style="left:833.00px;top:178.49px;font:400 10.06px/10.06px 'Liberation Sans',sans-serif;color:#b8b6b4;transform:scaleX(0.9421);transform-origin:0 0;">стилі</div>
<svg class="a" style="left:857px;top:181px;" width="7" height="5" viewBox="0 0 7 5"><path d="M0.8 0.8 L3.5 3.5 L6.2 0.8" stroke="#c0bebc" stroke-width="1" fill="none"/></svg>
<svg class="a" style="left:874px;top:135px;" width="14" height="13" viewBox="0 0 14 13"><path d="M4 9 L1.5 6.5 L6 2 L10 6 Z" stroke="#b8b6b4" stroke-width="1.1" fill="none"/><path d="M6 2 L5 0.5 M10 6 L12 9" stroke="#b8b6b4" stroke-width="1"/><rect x="0" y="10.5" width="14" height="2.2" fill="#b8b6b4"/></svg>
<svg class="a" style="left:874px;top:154px;" width="14" height="13" viewBox="0 0 14 13"><path d="M3 8 L10 1 L12 3 L5 10 L2.5 10.5 Z" stroke="#b8b6b4" stroke-width="1.1" fill="none"/><rect x="0" y="10.5" width="14" height="2.2" fill="#b8b6b4"/><path d="M0.5 9 V1 H7" stroke="#b8b6b4" stroke-width="1" fill="none"/></svg>
<svg class="a" style="left:874px;top:174px;" width="14" height="11" viewBox="0 0 14 11"><path d="M1 6 L6 1 H13 V5 L8 10 H1 Z" stroke="#b8b6b4" stroke-width="1.1" fill="none"/><path d="M1 6 H8 L13 1 M8 6 V10" stroke="#b8b6b4" stroke-width="1" fill="none"/></svg>
<div class="t" style="left:890.00px;top:137.49px;font:400 10.06px/10.06px 'Liberation Sans',sans-serif;color:#b8b6b4;">Заливка фігури</div>
<div class="t" style="left:890.00px;top:156.49px;font:400 10.06px/10.06px 'Liberation Sans',sans-serif;color:#b8b6b4;transform:scaleX(1.0257);transform-origin:0 0;">Контур фігури</div>
<div class="t" style="left:890.00px;top:175.49px;font:400 10.06px/10.06px 'Liberation Sans',sans-serif;color:#b8b6b4;transform:scaleX(0.9667);transform-origin:0 0;">Ефекти для фігур</div>
<svg class="a" style="left:964px;top:141px;" width="6" height="4" viewBox="0 0 6 4"><path d="M0.5 0.5 L3 3 L5.5 0.5" stroke="#b8b6b4" stroke-width="0.9" fill="none"/></svg>
<svg class="a" style="left:959px;top:160px;" width="6" height="4" viewBox="0 0 6 4"><path d="M0.5 0.5 L3 3 L5.5 0.5" stroke="#b8b6b4" stroke-width="0.9" fill="none"/></svg>
<svg class="a" style="left:972px;top:179px;" width="6" height="4" viewBox="0 0 6 4"><path d="M0.5 0.5 L3 3 L5.5 0.5" stroke="#b8b6b4" stroke-width="0.9" fill="none"/></svg>
<svg class="a" style="left:998px;top:135px;" width="13" height="14" viewBox="0 0 13 14"><circle cx="8.3" cy="5" r="4.2" stroke="#444" stroke-width="1.2" fill="none"/><path d="M5.3 8 L0.8 12.8" stroke="#444" stroke-width="1.4"/></svg>
<div class="t" style="left:1013.50px;top:137.49px;font:700 10.06px/10.06px 'Liberation Sans',sans-serif;color:#3b3b3b;transform:scaleX(0.9077);transform-origin:0 0;">Знайти</div>
<svg class="a" style="left:997px;top:153px;" width="14" height="15" viewBox="0 0 14 15"><text x="7" y="6" font-size="6.5" fill="#8c48c8" font-family="Liberation Sans">b</text><text x="9" y="14" font-size="6.5" fill="#1e88e5" font-family="Liberation Sans">c</text><path d="M3 6 C0 8 1 12 5 12 M3.5 10 L5.5 12 L3.5 14" stroke="#1e88e5" stroke-width="1.1" fill="none"/></svg>
<div class="t" style="left:1013.50px;top:156.49px;font:700 10.06px/10.06px 'Liberation Sans',sans-serif;color:#3b3b3b;transform:scaleX(0.9123);transform-origin:0 0;">Замінити</div>
<svg class="a" style="left:1066px;top:159px;" width="6" height="4" viewBox="0 0 6 4"><path d="M0.5 0.5 L3 3 L5.5 0.5" stroke="#444" stroke-width="1.1" fill="none"/></svg>
<svg class="a" style="left:998px;top:173px;" width="11" height="14" viewBox="0 0 11 14"><path d="M1 1 L1 11 L3.7 8.7 L6 13 L7.8 12 L5.6 8 L9.2 7.8 Z" stroke="#444" stroke-width="1.1" fill="none"/></svg>
<div class="t" style="left:1013.50px;top:175.49px;font:700 10.06px/10.06px 'Liberation Sans',sans-serif;color:#3b3b3b;transform:scaleX(0.8705);transform-origin:0 0;">Виділити</div>
<svg class="a" style="left:1058px;top:178px;" width="6" height="4" viewBox="0 0 6 4"><path d="M0.5 0.5 L3 3 L5.5 0.5" stroke="#444" stroke-width="1.1" fill="none"/></svg>
<div class="a" style="left:6px;top:656px;width:1125px;height:3px;background:#dadada"></div>
<div class="a" style="left:6px;top:659px;width:1125px;height:18px;background:#f4f1f0"></div>
<div class="t" style="left:13.00px;top:663.49px;font:400 10.06px/10.06px 'Liberation Sans',sans-serif;color:#555;transform:scaleX(0.8837);transform-origin:0 0;">Слайд 1 з 10</div>
<div class="t" style="left:91.00px;top:663.49px;font:400 10.06px/10.06px 'Liberation Sans',sans-serif;color:#555;transform:scaleX(0.9506);transform-origin:0 0;">українська</div>
<svg class="a" style="left:696px;top:660px;" width="14" height="14" viewBox="0 0 14 14"><path d="M4 3 L7 0.8 L10 3" stroke="#555" stroke-width="1" fill="none"/><path d="M0.5 6 H13.5 M0.5 9 H13.5 M0.5 12 H13.5" stroke="#555" stroke-width="1"/></svg>
<div class="t" style="left:711.60px;top:663.49px;font:700 10.06px/10.06px 'Liberation Sans',sans-serif;color:#555;transform:scaleX(0.9093);transform-origin:0 0;">Нотатки</div>
<svg class="a" style="left:763px;top:661px;" width="13" height="13" viewBox="0 0 13 13"><path d="M0.6 0.6 H12.4 V8.4 H5 L2.5 11.5 V8.4 H0.6 Z" stroke="#555" stroke-width="1.1" fill="none"/></svg>
<div class="t" style="left:778.50px;top:663.49px;font:700 10.06px/10.06px 'Liberation Sans',sans-serif;color:#555;transform:scaleX(0.8993);transform-origin:0 0;">Примітки</div>
<div class="a" style="left:836px;top:659px;width:33px;height:18px;background:#d2d0ce"></div>
<svg class="a" style="left:846px;top:663px;" width="13" height="10" viewBox="0 0 13 10"><rect x="0.6" y="0.6" width="11.8" height="8.8" stroke="#444" stroke-width="1.1" fill="none"/><rect x="3" y="2.5" width="6" height="4" stroke="#444" stroke-width="0.9" fill="none"/></svg>
<svg class="a" style="left:879px;top:662px;" width="12" height="12" viewBox="0 0 12 12"><rect x="0.6" y="0.6" width="4.3" height="4.3" stroke="#555" stroke-width="1" fill="none"/><rect x="7" y="0.6" width="4.3" height="4.3" stroke="#555" stroke-width="1" fill="none"/><rect x="0.6" y="7" width="4.3" height="4.3" stroke="#555" stroke-width="1" fill="none"/><rect x="7" y="7" width="4.3" height="4.3" stroke="#555" stroke-width="1" fill="none"/></svg>
<svg class="a" style="left:912px;top:662px;" width="12" height="11" viewBox="0 0 12 11"><path d="M6 2 C4 0.5 2 0.5 0.6 1 V10 C2 9.5 4 9.5 6 10.5 C8 9.5 10 9.5 11.4 10 V1 C10 0.5 8 0.5 6 2 V10.5" stroke="#555" stroke-width="1" fill="none"/></svg>
<svg class="a" style="left:945px;top:661px;" width="12" height="13" viewBox="0 0 12 13"><rect x="0.6" y="0.6" width="10.8" height="6" stroke="#555" stroke-width="1" fill="none"/><path d="M6 6.6 V12 M3 12 H9" stroke="#555" stroke-width="1"/></svg>
<div class="a" style="left:973px;top:667.5px;width:6px;height:1px;background:#555"></div>
<div class="a" style="left:983.6px;top:667.5px;width:81.4px;height:1px;background:#b0b0b0"></div>
<div class="a" style="left:1010px;top:663px;width:4px;height:9px;background:#666"></div>
<div class="a" style="left:1024px;top:665px;width:1px;height:5px;background:#999"></div>
<div class="a" style="left:1069.5px;top:667.5px;width:7px;height:1px;background:#555"></div>
<div class="a" style="left:1072.5px;top:664.5px;width:1px;height:7px;background:#555"></div>
<div class="t" style="left:1087.00px;top:663.49px;font:400 10.06px/10.06px 'Liberation Sans',sans-serif;color:#555;transform:scaleX(0.8446);transform-origin:0 0;">72%</div>
<svg class="a" style="left:1114px;top:661px;" width="13" height="14" viewBox="0 0 13 14"><rect x="3.5" y="4" width="6" height="6" stroke="#555" stroke-width="1" fill="none"/><path d="M6.5 0.5 L5 2 H8 Z M6.5 13.5 L5 12 H8 Z M0.5 7 L2 5.5 V8.5 Z M12.5 7 L11 5.5 V8.5 Z" fill="#555" stroke="#555" stroke-width="0.6"/></svg>
<div class="a" style="left:6px;top:677px;width:1125px;height:33px;background:linear-gradient(90deg,#22303d 0,#21303f 50%,#1f2a42 100%)"></div>
<div class="a" style="left:6px;top:677px;width:39px;height:33px;background:#1f3a48"></div>
<svg class="a" style="left:18px;top:687px;" width="15" height="14" viewBox="0 0 15 14"><path d="M0 2 L6.3 1.1 V6.6 H0 Z M7.3 1 L15 0 V6.6 H7.3 Z M0 7.5 H6.3 V13 L0 12.1 Z M7.3 7.5 H15 V14 L7.3 13 Z" fill="#fff"/></svg>
<div class="a" style="left:45px;top:677px;width:283px;height:33px;background:#f1f1f3"></div>
<svg class="a" style="left:55px;top:684px;" width="16" height="17" viewBox="0 0 16 17"><circle cx="10" cy="6" r="5" stroke="#333" stroke-width="1.4" fill="none"/><path d="M6.5 9.5 L1 15.5" stroke="#333" stroke-width="1.6"/></svg>
<div class="t" style="left:78.50px;top:687.86px;font:400 12.57px/12.57px 'Liberation Sans',sans-serif;color:#4a4a4a;transform:scaleX(0.9873);transform-origin:0 0;">Щоби почати пошук, введіть запит тут</div>
<svg class="a" style="left:340px;top:685px;" width="14" height="14" viewBox="0 0 14 14"><rect x="2.5" y="3" width="8" height="8" stroke="#dde" stroke-width="1.1" fill="none"/><path d="M0.5 1 H12.5 M0.5 13 H12.5" stroke="#dde" stroke-width="1.1"/><rect x="12.5" y="3.5" width="1.5" height="2" fill="#dde"/><rect x="12.5" y="7" width="1.5" height="5" fill="#dde"/></svg>
<svg class="a" style="left:381px;top:686px;" width="18" height="15" viewBox="0 0 18 15"><path d="M0 2 H7 L8.5 3.5 H18 V15 H0 Z" fill="#f7c64a"/><rect x="0" y="5" width="18" height="10" fill="#fddb6d"/><rect x="5" y="9" width="8" height="5" fill="#1e88e5"/><rect x="7" y="10.5" width="4" height="3.5" fill="#fddb6d"/></svg>
<svg class="a" style="left:421px;top:684px;" width="22" height="22" viewBox="0 0 22 22"><circle cx="10" cy="10" r="9.5" fill="#db4437"/><path d="M10 10 L18.2 5.2 A9.5 9.5 0 0 1 10 19.5 Z" fill="#f4b400"/><path d="M10 10 L10 19.5 A9.5 9.5 0 0 1 1.8 5.2 Z" fill="#0f9d58"/><circle cx="10" cy="10" r="4.4" fill="#fff"/><circle cx="10" cy="10" r="3.4" fill="#4285f4"/><circle cx="15.5" cy="15.5" r="5.5" fill="#fff"/><circle cx="15.5" cy="15.5" r="4.6" fill="#b7846a"/><circle cx="15.5" cy="14.5" r="2" fill="#f0c9b0"/></svg>
<div class="a" style="left:461px;top:684px;width:20px;height:20px;background:radial-gradient(circle at 45% 35%,#3e8cff,#1a55d6);border-radius:50%"></div>
<div class="t" style="left:464.00px;top:688.47px;font:700 10.08px/10.08px 'Liberation Sans',sans-serif;color:#fff;">zm</div>
<div class="a" style="left:492px;top:677px;width:39px;height:33px;background:#3b4954"></div>
<div class="a" style="left:504px;top:685px;width:19px;height:17px;background:#d35230;border-radius:50%"></div>
<div class="a" style="left:514px;top:685px;width:9px;height:8.5px;background:#ff8f6b;border-radius:0 9px 0 0"></div>
<div class="a" style="left:501px;top:688px;width:11px;height:11px;background:#c43e1c;border-radius:1px"></div>
<div class="t" style="left:503.50px;top:689.25px;font:700 9.74px/9.74px 'Liberation Sans',sans-serif;color:#fff;">P</div>
<svg class="a" style="left:541px;top:685px;" width="20" height="17" viewBox="0 0 20 17"><rect x="5" y="0" width="15" height="17" rx="1.5" fill="#2b7cd3"/><rect x="5" y="4" width="15" height="4.5" fill="#185abd"/><rect x="5" y="12.5" width="15" height="4.5" fill="#103f91"/><rect x="0" y="3" width="11" height="11" rx="1" fill="#185abd"/><text x="5.5" y="12" font-size="9" font-weight="700" fill="#fff" text-anchor="middle" font-family="Liberation Sans">W</text></svg>
<div class="a" style="left:414px;top:707.5px;width:33px;height:2px;background:#8cc4f5"></div>
<div class="a" style="left:454px;top:707.5px;width:34px;height:2px;background:#8cc4f5"></div>
<div class="a" style="left:492px;top:707.5px;width:39px;height:2px;background:#8cc4f5"></div>
<div class="a" style="left:535px;top:707.5px;width:33px;height:2px;background:#8cc4f5"></div>
<svg class="a" style="left:908.5px;top:689.5px;" width="11" height="7" viewBox="0 0 11 7"><path d="M0.8 6.2 L5.5 1 L10.2 6.2" stroke="#e8eaf0" stroke-width="1.3" fill="none"/></svg>
<svg class="a" style="left:928px;top:686px;" width="10" height="15" viewBox="0 0 10 15"><rect x="2.5" y="0.5" width="5" height="9" rx="2.5" fill="#e8eaf0"/><path d="M0.8 6 C0.8 12 9.2 12 9.2 6 M5 11 V14 M2.5 14 H7.5" stroke="#e8eaf0" stroke-width="1.1" fill="none"/></svg>
<svg class="a" style="left:946px;top:688px;" width="15" height="11" viewBox="0 0 15 11"><rect x="3.5" y="3" width="10.5" height="6" stroke="#e8eaf0" stroke-width="1.1" fill="none"/><rect x="14" y="5" width="1" height="2" fill="#e8eaf0"/><circle cx="2" cy="3" r="1.6" stroke="#e8eaf0" stroke-width="1" fill="none"/><path d="M2 4.5 V10 H5" stroke="#e8eaf0" stroke-width="1" fill="none"/></svg>
<svg class="a" style="left:968px;top:687px;" width="12" height="12" viewBox="0 0 12 12"><path d="M1 11 A10 10 0 0 1 11 1 M3.5 11 A7.5 7.5 0 0 1 11 3.5 M6 11 A5 5 0 0 1 11 6" stroke="#e8eaf0" stroke-width="1" fill="none"/><circle cx="10" cy="10" r="1.4" fill="#e8eaf0"/></svg>
<svg class="a" style="left:986px;top:687px;" width="14" height="13" viewBox="0 0 14 13"><path d="M0.6 4 H3 L7 0.8 V12.2 L3 9 H0.6 Z" stroke="#e8eaf0" stroke-width="1" fill="none"/><path d="M9 4 Q10.5 6.5 9 9 M10.8 2.5 Q13.5 6.5 10.8 10.5" stroke="#e8eaf0" stroke-width="1" fill="none"/></svg>
<div class="t" style="left:1008.00px;top:687.54px;font:400 11.17px/11.17px 'Liberation Sans',sans-serif;color:#f2f2f2;transform:scaleX(0.7847);transform-origin:0 0;">ENG</div>
<div class="t" style="left:1048.60px;top:680.28px;font:400 10.89px/10.89px 'Liberation Sans',sans-serif;color:#f2f2f2;transform:scaleX(0.8180);transform-origin:0 0;">12:40</div>
<div class="t" style="left:1038.30px;top:695.28px;font:400 10.89px/10.89px 'Liberation Sans',sans-serif;color:#f2f2f2;transform:scaleX(0.8015);transform-origin:0 0;">12.06.2025</div>
<svg class="a" style="left:1096px;top:687px;" width="15" height="14" viewBox="0 0 15 14"><path d="M0.6 0.6 H14.4 V10 H9 L7.5 12.8 L6 10 H0.6 Z" stroke="#e8eaf0" stroke-width="1.1" fill="none"/></svg>
<div class="a" style="left:1126.5px;top:677px;width:1.5px;height:33px;background:#6a7e98"></div>
<div class="a" style="left:188px;top:212px;width:12px;height:444px;background:#dcdcdc;border:1px solid #cfcfcf"></div>
<div class="a" style="left:188px;top:212px;width:12px;height:13px;background:#fff;border:1px solid #c8c8c8"></div>
<svg class="a" style="left:190px;top:216px;" width="8" height="5" viewBox="0 0 8 5"><path d="M0.5 4.5 L4 0.8 L7.5 4.5 Z" fill="#555"/></svg>
<div class="a" style="left:189px;top:225px;width:10px;height:193px;background:#fff;border-left:1px solid #cfcfcf;border-right:1px solid #cfcfcf"></div>
<div class="a" style="left:188px;top:644px;width:12px;height:13px;background:#fff;border:1px solid #c8c8c8"></div>
<svg class="a" style="left:190px;top:648px;" width="8" height="5" viewBox="0 0 8 5"><path d="M0.5 0.5 L4 4.2 L7.5 0.5 Z" fill="#555"/></svg>
<div class="a" style="left:203px;top:212px;width:1px;height:444px;background:#d0d0d0"></div>
<div class="t" style="left:17.00px;top:223.86px;font:400 12.57px/12.57px 'Liberation Sans',sans-serif;color:#c43e1c;transform:scaleX(0.7866);transform-origin:0 0;">1</div>
<div class="t" style="left:17.00px;top:322.36px;font:400 12.57px/12.57px 'Liberation Sans',sans-serif;color:#555;transform:scaleX(0.7866);transform-origin:0 0;">2</div>
<div class="t" style="left:17.00px;top:411.86px;font:400 12.57px/12.57px 'Liberation Sans',sans-serif;color:#555;transform:scaleX(0.7866);transform-origin:0 0;">3</div>
<div class="t" style="left:17.00px;top:505.86px;font:400 12.57px/12.57px 'Liberation Sans',sans-serif;color:#555;transform:scaleX(0.7866);transform-origin:0 0;">4</div>
<div class="t" style="left:17.00px;top:599.36px;font:400 12.57px/12.57px 'Liberation Sans',sans-serif;color:#555;transform:scaleX(0.7866);transform-origin:0 0;">5</div>
<div class="a" style="left:32.5px;top:223px;width:140.5px;height:82.5px;border:2.5px solid #c0472a"></div>
<svg class="a" style="left:0px;top:0px;" width="200" height="320" viewBox="0 0 200 320"><rect x="35.5" y="225.5" width="135" height="77" fill="#fff"/><polygon points="35.5,233.9 69.4,268.1 58.1,279.4 35.5,256.7" fill="#4a929f"/><polygon points="35.5,279.5 57.4,301.6 35.5,301.6" fill="#80a55a"/><polygon points="80.8,279.5 102.9,301.6 58.5,301.6" fill="#f8d24c"/></svg>
<div class="t" style="left:127.00px;top:232.71px;font:700 6.60px/6.60px 'Liberation Sans',sans-serif;color:#1a1a2a;transform:scaleX(1.0080);transform-origin:0 0;-webkit-text-stroke:0.25px #1a1a2a;">«Розвиток</div>
<div class="t" style="left:92.50px;top:239.71px;font:700 6.60px/6.60px 'Liberation Sans',sans-serif;color:#1a1a2a;transform:scaleX(1.0310);transform-origin:0 0;-webkit-text-stroke:0.25px #1a1a2a;">клієнтоорієнтованої</div>
<div class="t" style="left:76.00px;top:246.61px;font:700 6.60px/6.60px 'Liberation Sans',sans-serif;color:#1a1a2a;transform:scaleX(1.0219);transform-origin:0 0;-webkit-text-stroke:0.25px #1a1a2a;">платформи транспортної</div>
<div class="t" style="left:118.00px;top:253.61px;font:700 6.60px/6.60px 'Liberation Sans',sans-serif;color:#1a1a2a;transform:scaleX(0.9925);transform-origin:0 0;-webkit-text-stroke:0.25px #1a1a2a;">мобільності»</div>
<div class="a" style="left:125.5px;top:268.5px;width:23.5px;height:1px;background:#6a8a48"></div>
<div class="t" style="left:132.80px;top:274.76px;font:700 4.47px/4.47px 'Liberation Serif',sans-serif;color:#333;">Дмитро Лірук,</div>
<div class="t" style="left:101.80px;top:282.78px;font:700 3.37px/3.37px 'Liberation Serif',sans-serif;color:#333;">здобувач другого (магістерського) рівня</div>
<div class="t" style="left:121.20px;top:286.69px;font:700 3.36px/3.36px 'Liberation Serif',sans-serif;color:#333;">вищої освіти спеціальність</div>
<div class="t" style="left:109.50px;top:290.59px;font:700 3.36px/3.36px 'Liberation Serif',sans-serif;color:#333;">076 «Підприємництво та торгівля»</div>
<div class="a" style="left:35px;top:319.5px;width:135.5px;height:77px;background:#fff;border:1px solid #d6d6d6"></div>
<svg class="a" style="left:36px;top:320px;" width="134" height="76" viewBox="0 0 134 76"><defs><clipPath id="cdl"><polygon points="77,22 91,8.5 105,22 91,36"/></clipPath><clipPath id="cdr"><polygon points="105.5,22 119.5,8 133.5,22 119.5,36"/></clipPath></defs><polygon points="70,0 89,0 112,23 112,29 105.5,35.5" fill="#4a929f"/><polygon points="99,0 112,0 105.5,7" fill="#4a929f"/><polygon points="77,22 91,8.5 105,22 91,36" fill="#f8d24c"/><polygon points="105.5,22 119.5,8 133.5,22 119.5,36" fill="#f8d24c"/><polygon points="70,0 89,0 112,23 112,29 105.5,35.5" fill="#80a55a" clip-path="url(#cdl)"/><polygon points="70,0 89,0 112,23 112,29 105.5,35.5" fill="#80a55a" clip-path="url(#cdr)"/><rect x="6.5" y="24" width="23.5" height="1" fill="#98a880"/></svg>
<div class="t" style="left:38.50px;top:325.55px;font:700 3.60px/3.60px 'Liberation Sans',sans-serif;color:#1a1a1a;transform:scaleX(0.8597);transform-origin:0 0;-webkit-text-stroke:0.3px #111;">Мета роботи полягає в дослідженні теоретичних</div>
<div class="t" style="left:38.50px;top:329.15px;font:700 3.60px/3.60px 'Liberation Sans',sans-serif;color:#1a1a1a;transform:scaleX(0.8135);transform-origin:0 0;-webkit-text-stroke:0.3px #111;">засад сучасного стану та перспектив розвитку</div>
<div class="t" style="left:38.50px;top:332.75px;font:700 3.60px/3.60px 'Liberation Sans',sans-serif;color:#1a1a1a;transform:scaleX(0.7326);transform-origin:0 0;-webkit-text-stroke:0.3px #111;">клієнтоорієнтованої платформи у сфері транспортної</div>
<div class="t" style="left:38.50px;top:336.35px;font:700 3.60px/3.60px 'Liberation Sans',sans-serif;color:#1a1a1a;transform:scaleX(0.7512);transform-origin:0 0;-webkit-text-stroke:0.3px #111;">мобільності.</div>
<div class="t" style="left:42.00px;top:355.92px;font:400 3.40px/3.40px 'Liberation Sans',sans-serif;color:#444;transform:scaleX(0.9066);transform-origin:0 0;-webkit-text-stroke:0.15px #555;">Перспективи розвитку платформи обумовлені стрімким зростанням попиту на</div>
<div class="t" style="left:39.00px;top:360.52px;font:400 3.40px/3.40px 'Liberation Sans',sans-serif;color:#444;transform:scaleX(0.9945);transform-origin:0 0;-webkit-text-stroke:0.15px #555;">транспортні послуги, що вимагає впровадження сучасних цифрових рішень</div>
<div class="t" style="left:39.00px;top:365.82px;font:400 3.40px/3.40px 'Liberation Sans',sans-serif;color:#444;transform:scaleX(0.9084);transform-origin:0 0;-webkit-text-stroke:0.15px #555;">та орієнтованих на клієнта сервісів для підвищення якості обслуговування пасажирів,</div>
<div class="t" style="left:39.00px;top:370.32px;font:400 3.40px/3.40px 'Liberation Sans',sans-serif;color:#444;transform:scaleX(0.9599);transform-origin:0 0;-webkit-text-stroke:0.15px #555;">а також ефективного управління транспортними потоками у містах та регіонах</div>
<div class="t" style="left:39.00px;top:374.92px;font:400 3.40px/3.40px 'Liberation Sans',sans-serif;color:#444;transform:scaleX(1.0811);transform-origin:0 0;-webkit-text-stroke:0.15px #555;">з урахуванням потреб різних груп користувачів мобільних платформ</div>
<div class="t" style="left:39.00px;top:379.82px;font:400 3.40px/3.40px 'Liberation Sans',sans-serif;color:#444;transform:scaleX(0.7595);transform-origin:0 0;-webkit-text-stroke:0.15px #555;">на ринку транспорту.</div>
<div class="t" style="left:42.00px;top:355.92px;font:700 3.40px/3.40px 'Liberation Sans',sans-serif;color:#111;transform:scaleX(1.0510);transform-origin:0 0;-webkit-text-stroke:0.3px #111;">Перспективи</div>
<div class="a" style="left:35px;top:413px;width:135.5px;height:77.5px;background:#fff;border:1px solid #d6d6d6"></div>
<svg class="a" style="left:36px;top:414px;" width="134" height="76" viewBox="0 0 134 76"><polygon points="0,8.7 18,27.5 18,49 0,31.6" fill="#4a929f"/><polygon points="0,54.5 21,76 0,76" fill="#80a55a"/><polygon points="23,76 27.5,70 62,70 66,76" fill="#f8d24c"/><rect x="18" y="28" width="110.2" height="41.5" fill="#fff" stroke="#8a8a8a" stroke-width="0.5"/><line x1="94.5" y1="28" x2="94.5" y2="69.5" stroke="#8a8a8a" stroke-width="0.5"/><line x1="18" y1="31.8" x2="128.2" y2="31.8" stroke="#999" stroke-width="0.45"/><line x1="18" y1="35.5" x2="128.2" y2="35.5" stroke="#999" stroke-width="0.45"/><line x1="18" y1="39" x2="128.2" y2="39" stroke="#999" stroke-width="0.45"/><line x1="18" y1="45.5" x2="128.2" y2="45.5" stroke="#999" stroke-width="0.45"/><line x1="18" y1="49" x2="128.2" y2="49" stroke="#999" stroke-width="0.45"/><line x1="18" y1="52.7" x2="128.2" y2="52.7" stroke="#999" stroke-width="0.45"/><line x1="18" y1="59" x2="128.2" y2="59" stroke="#999" stroke-width="0.45"/><line x1="18" y1="62.8" x2="128.2" y2="62.8" stroke="#999" stroke-width="0.45"/><rect x="45" y="29.5" width="25" height="0.9" fill="#aaa"/><rect x="105" y="29.5" width="12" height="0.9" fill="#aaa"/><rect x="20" y="33" width="10" height="0.9" fill="#aaa"/><rect x="20" y="36.7" width="6" height="0.9" fill="#aaa"/><rect x="20" y="40.5" width="72" height="0.9" fill="#aaa"/><rect x="20" y="43.5" width="68" height="0.9" fill="#aaa"/><rect x="20" y="46.7" width="72" height="0.9" fill="#aaa"/><rect x="20" y="50.3" width="55" height="0.9" fill="#aaa"/><rect x="20" y="54" width="72" height="0.9" fill="#aaa"/><rect x="20" y="57" width="12" height="0.9" fill="#aaa"/><rect x="20" y="60.5" width="26" height="0.9" fill="#aaa"/><rect x="20" y="64.5" width="72" height="0.9" fill="#aaa"/><rect x="20" y="67.5" width="34" height="0.9" fill="#aaa"/><rect x="96" y="33" width="22" height="0.9" fill="#aaa"/><rect x="96" y="36.7" width="22" height="0.9" fill="#aaa"/><rect x="96" y="40.5" width="22" height="0.9" fill="#aaa"/><rect x="96" y="46.7" width="29" height="0.9" fill="#aaa"/><rect x="96" y="50.3" width="29" height="0.9" fill="#aaa"/><rect x="96" y="54" width="29" height="0.9" fill="#aaa"/><rect x="96" y="60.5" width="29" height="0.9" fill="#aaa"/><rect x="96" y="64.5" width="24" height="0.9" fill="#aaa"/></svg>
<div class="a" style="left:35px;top:507px;width:135.5px;height:77.5px;background:#fff;border:1px solid #d6d6d6"></div>
<div class="a" style="left:36px;top:508px;width:63px;height:76px;background:radial-gradient(ellipse 18px 30px at 50px 15px,#a5a5a5,rgba(0,0,0,0)),radial-gradient(ellipse 14px 30px at 12px 50px,#9a9a9a,rgba(0,0,0,0)),radial-gradient(ellipse 20px 25px at 35px 60px,#555,rgba(0,0,0,0)),linear-gradient(120deg,#7a7a7a 0,#5e5e5e 30%,#8a8a8a 50%,#555 75%,#6a6a6a 100%)"></div>
<svg class="a" style="left:36px;top:508px;" width="134" height="76" viewBox="0 0 134 76"><rect x="17.5" y="22" width="112.5" height="50" fill="#dae5eb"/><rect x="17.5" y="22" width="112.5" height="4" fill="#eef3f6"/><rect x="28" y="23.5" width="8" height="1" fill="#333"/><rect x="80" y="23.5" width="16" height="1" fill="#333"/><rect x="17.5" y="26.0" width="112.5" height="2" fill="#c6d7e0"/><rect x="19" y="26.8" width="10" height="1.2" fill="#222"/><rect x="47" y="26.8" width="36" height="1" fill="#666"/><rect x="17.5" y="30.1" width="112.5" height="2" fill="#c6d7e0"/><rect x="19" y="30.9" width="9" height="1.2" fill="#222"/><rect x="47" y="30.9" width="28" height="1" fill="#666"/><rect x="17.5" y="34.2" width="112.5" height="2" fill="#c6d7e0"/><rect x="19" y="35.0" width="5" height="1.2" fill="#222"/><rect x="47" y="35.0" width="50" height="1" fill="#666"/><rect x="17.5" y="38.3" width="112.5" height="2" fill="#c6d7e0"/><rect x="19" y="39.1" width="7" height="1.2" fill="#222"/><rect x="47" y="39.1" width="40" height="1" fill="#666"/><rect x="17.5" y="42.4" width="112.5" height="2" fill="#c6d7e0"/><rect x="19" y="43.2" width="9" height="1.2" fill="#222"/><rect x="47" y="43.2" width="38" height="1" fill="#666"/><rect x="17.5" y="46.5" width="112.5" height="2" fill="#c6d7e0"/><rect x="19" y="47.3" width="6" height="1.2" fill="#222"/><rect x="47" y="47.3" width="45" height="1" fill="#666"/><rect x="17.5" y="50.6" width="112.5" height="2" fill="#c6d7e0"/><rect x="19" y="51.4" width="11" height="1.2" fill="#222"/><rect x="47" y="51.4" width="44" height="1" fill="#666"/><rect x="17.5" y="54.7" width="112.5" height="2" fill="#c6d7e0"/><rect x="19" y="55.5" width="9" height="1.2" fill="#222"/><rect x="47" y="55.5" width="55" height="1" fill="#666"/><rect x="17.5" y="58.8" width="112.5" height="2" fill="#c6d7e0"/><rect x="19" y="59.6" width="25" height="1.2" fill="#222"/><rect x="47" y="59.6" width="60" height="1" fill="#666"/><rect x="17.5" y="62.9" width="112.5" height="2" fill="#c6d7e0"/><rect x="19" y="63.7" width="6" height="1.2" fill="#222"/><rect x="47" y="63.7" width="40" height="1" fill="#666"/><rect x="17.5" y="67.0" width="112.5" height="2" fill="#c6d7e0"/><rect x="19" y="67.8" width="8" height="1.2" fill="#222"/><rect x="47" y="67.8" width="32" height="1" fill="#666"/></svg>
<div class="a" style="left:35px;top:601px;width:135.5px;height:56px;background:#fff;border:1px solid #d6d6d6"></div>
<svg class="a" style="left:36px;top:602px;" width="134" height="55" viewBox="0 0 134 55"><rect x="6" y="24" width="24" height="1" fill="#6a8a48"/><polygon points="0,43 10,53 0,55" fill="#4a929f"/><rect x="22" y="28" width="91.7" height="27" fill="#fff" stroke="#999" stroke-width="0.5"/><line x1="22" y1="31.4" x2="113.7" y2="31.4" stroke="#aaa" stroke-width="0.45"/><rect x="24" y="32.7" width="30" height="0.9" fill="#888"/><line x1="22" y1="34.8" x2="113.7" y2="34.8" stroke="#aaa" stroke-width="0.45"/><rect x="24" y="36.1" width="30" height="0.9" fill="#888"/><line x1="22" y1="38.2" x2="113.7" y2="38.2" stroke="#aaa" stroke-width="0.45"/><rect x="24" y="39.5" width="30" height="0.9" fill="#888"/><line x1="22" y1="41.6" x2="113.7" y2="41.6" stroke="#aaa" stroke-width="0.45"/><rect x="24" y="42.9" width="30" height="0.9" fill="#888"/><line x1="22" y1="45.0" x2="113.7" y2="45.0" stroke="#aaa" stroke-width="0.45"/><rect x="24" y="46.3" width="30" height="0.9" fill="#888"/><line x1="22" y1="48.4" x2="113.7" y2="48.4" stroke="#aaa" stroke-width="0.45"/><rect x="24" y="49.7" width="30" height="0.9" fill="#888"/><line x1="22" y1="51.8" x2="113.7" y2="51.8" stroke="#aaa" stroke-width="0.45"/><rect x="24" y="53.1" width="30" height="0.9" fill="#888"/><line x1="22" y1="55.2" x2="113.7" y2="55.2" stroke="#aaa" stroke-width="0.45"/><rect x="24" y="56.5" width="30" height="0.9" fill="#888"/><line x1="63" y1="28" x2="63" y2="55" stroke="#aaa" stroke-width="0.45"/><line x1="72" y1="28" x2="72" y2="55" stroke="#aaa" stroke-width="0.45"/><line x1="81" y1="28" x2="81" y2="55" stroke="#aaa" stroke-width="0.45"/><line x1="90" y1="28" x2="90" y2="55" stroke="#aaa" stroke-width="0.45"/></svg>
<div class="t" style="left:140.00px;top:422.54px;font:700 4.80px/4.80px 'Liberation Sans',sans-serif;color:#111;transform:scaleX(0.9718);transform-origin:0 0;-webkit-text-stroke:0.4px #111;">Таблиця 1.</div>
<div class="t" style="left:67.30px;top:427.74px;font:700 4.80px/4.80px 'Liberation Sans',sans-serif;color:#111;transform:scaleX(0.8905);transform-origin:0 0;-webkit-text-stroke:0.4px #111;">Переваги платформенних стартів платформи</div>
<div class="t" style="left:102.50px;top:433.24px;font:700 4.80px/4.80px 'Liberation Sans',sans-serif;color:#111;-webkit-text-stroke:0.4px #111;">транспортної мобільності</div>
<div class="t" style="left:143.00px;top:511.44px;font:700 4.80px/4.80px 'Liberation Sans',sans-serif;color:#111;transform:scaleX(0.9551);transform-origin:0 0;-webkit-text-stroke:0.4px #111;">Таблиця 2</div>
<div class="t" style="left:117.00px;top:517.64px;font:700 4.80px/4.80px 'Liberation Sans',sans-serif;color:#111;transform:scaleX(0.9683);transform-origin:0 0;-webkit-text-stroke:0.4px #111;">Інноваційні продукти</div>
<div class="t" style="left:147.00px;top:523.14px;font:700 4.80px/4.80px 'Liberation Sans',sans-serif;color:#111;transform:scaleX(0.8832);transform-origin:0 0;-webkit-text-stroke:0.4px #111;">компаній</div>
<div class="t" style="left:133.00px;top:608.94px;font:700 4.80px/4.80px 'Liberation Sans',sans-serif;color:#111;transform:scaleX(0.9717);transform-origin:0 0;-webkit-text-stroke:0.4px #111;">Таблиця 3</div>
<div class="t" style="left:79.30px;top:619.24px;font:700 4.80px/4.80px 'Liberation Sans',sans-serif;color:#111;transform:scaleX(1.0057);transform-origin:0 0;-webkit-text-stroke:0.4px #111;">Рентабельність підприємства, %</div>
<div class="a" style="left:282px;top:218px;width:759px;height:429px;background:#fff;border:1px solid #d4d4d4"></div>
<svg class="a" style="left:283px;top:219px;" width="757" height="427" viewBox="0 0 757 427"><polygon points="0,47 190.2,239 127,302 0,174.4" fill="#4a929f"/><polygon points="0,303.4 123,427 0,427" fill="#80a55a"/><polygon points="254,302.8 378,427 129,427" fill="#f8d24c"/></svg>
<div class="t" style="left:796.00px;top:257.13px;font:700 38.00px/38.00px 'Liberation Sans',sans-serif;color:#000;transform:scaleX(0.9887);transform-origin:0 0;">«Розвиток</div>
<div class="t" style="left:602.50px;top:296.33px;font:700 38.00px/38.00px 'Liberation Sans',sans-serif;color:#000;transform:scaleX(1.0078);transform-origin:0 0;">клієнтоорієнтованої</div>
<div class="t" style="left:512.00px;top:335.33px;font:700 38.00px/38.00px 'Liberation Sans',sans-serif;color:#000;transform:scaleX(0.9939);transform-origin:0 0;">платформи транспортної</div>
<div class="t" style="left:745.00px;top:374.63px;font:700 38.00px/38.00px 'Liberation Sans',sans-serif;color:#000;transform:scaleX(0.9741);transform-origin:0 0;">мобільності»</div>
<div class="a" style="left:674.5px;top:461px;width:132.5px;height:7px;background:#6a8a48"></div>
<div class="t" style="left:827.10px;top:495.43px;font:700 25.03px/25.03px 'Liberation Serif',sans-serif;color:#111;">Дмитро Лірук,</div>
<div class="t" style="left:653.10px;top:539.99px;font:700 18.87px/18.87px 'Liberation Serif',sans-serif;color:#1a1a1a;">здобувач другого (магістерського) рівня</div>
<div class="t" style="left:761.80px;top:561.63px;font:700 18.83px/18.83px 'Liberation Serif',sans-serif;color:#1a1a1a;">вищої освіти спеціальність</div>
<div class="t" style="left:695.80px;top:583.40px;font:700 18.86px/18.86px 'Liberation Serif',sans-serif;color:#1a1a1a;">076 «Підприємництво та торгівля»</div>
<svg class="a" style="left:607px;top:467px;" width="8" height="14" viewBox="0 0 8 14"><path d="M1 0.5 H7 M4 0.5 V13.5 M1 13.5 H7" stroke="#555" stroke-width="1.1" fill="none"/></svg>
<div class="a" style="left:1118px;top:211px;width:12px;height:445px;background:#dcdcdc"></div>
<div class="a" style="left:1118px;top:211px;width:12px;height:13px;background:#fff;border:1px solid #c8c8c8"></div>
<svg class="a" style="left:1120px;top:215px;" width="8" height="5" viewBox="0 0 8 5"><path d="M0.5 4.5 L4 0.8 L7.5 4.5 Z" fill="#555"/></svg>
<div class="a" style="left:1119px;top:224px;width:10px;height:38px;background:#fff;border:1px solid #cfcfcf"></div>
<div class="a" style="left:1118px;top:598px;width:12px;height:13px;background:#fff;border:1px solid #c8c8c8"></div>
<svg class="a" style="left:1120px;top:602px;" width="8" height="5" viewBox="0 0 8 5"><path d="M0.5 0.5 L4 4.2 L7.5 0.5 Z" fill="#555"/></svg>
<div class="a" style="left:1118px;top:611px;width:12px;height:45px;background:#e4e4e4"></div>
<svg class="a" style="left:1120px;top:614px;" width="8" height="10" viewBox="0 0 8 10"><path d="M0.5 4.5 L4 1 L7.5 4.5 Z M0.5 9 L4 5.5 L7.5 9 Z" fill="#666"/><rect x="0.5" y="0" width="7" height="0.8" fill="#666"/></svg>
<svg class="a" style="left:1120px;top:628px;" width="8" height="10" viewBox="0 0 8 10"><path d="M0.5 1 L4 4.5 L7.5 1 Z M0.5 5.5 L4 9 L7.5 5.5 Z" fill="#666"/><rect x="0.5" y="9.2" width="7" height="0.8" fill="#666"/></svg>
<div class="a" style="left:1134px;top:382px;width:1.5px;height:24px;background:#8a8a8a"></div>
<div class="a" style="left:1137.5px;top:382px;width:1.5px;height:24px;background:#8a8a8a"></div>
<div class="a" style="left:1207px;top:125px;width:157px;height:92px;background:linear-gradient(180deg,#e4ee8a 0,#d6ec7a 12%,#8ad62a 45%,#7fd020 55%,#d0ea70 85%,#eaf28e 100%)"></div>
<div class="a" style="left:1211px;top:129px;width:149px;height:84px;overflow:hidden"><div class="a" style="left:-1211px;top:-129px;width:1429px;height:804px;filter:blur(1.3px)">
<div class="a" style="left:1211px;top:129px;width:149px;height:84px;background:linear-gradient(180deg,#d5d6d9 0,#cfd0d3 30%,#c9cacc 100%)"></div>
<div class="a" style="left:1211px;top:140.5px;width:64px;height:1.5px;background:#9a9b9d"></div>
<div class="a" style="left:1300px;top:152.5px;width:30px;height:1.2px;background:#9a9b9d"></div>
<div class="a" style="left:1211px;top:156px;width:46px;height:39px;background:#262b34"></div>
<div class="a" style="left:1339px;top:129px;width:8px;height:84px;background:linear-gradient(90deg,#b2cccc,#c5d6d4)"></div>
<div class="a" style="left:1347px;top:129px;width:13px;height:84px;background:linear-gradient(90deg,#cfcfcf,#bdbdbd)"></div>
<div class="a" style="left:1250px;top:187px;width:90px;height:26px;background:#dfe3e3;border-radius:24px 28px 0 0"></div>
<div class="a" style="left:1278px;top:183px;width:26px;height:10px;background:#a88a7c;border-radius:0 0 50% 50%"></div>
<div class="a" style="left:1264px;top:155px;width:6px;height:13px;background:#a88a7c;border-radius:50%"></div>
<div class="a" style="left:1305px;top:155px;width:6px;height:13px;background:#a88a7c;border-radius:50%"></div>
<div class="a" style="left:1268px;top:140px;width:38px;height:55px;background:#b49585;border-radius:42% 42% 46% 46%"></div>
<div class="a" style="left:1266px;top:134px;width:42px;height:17px;background:#2b2623;border-radius:50% 50% 20% 20%"></div>
<div class="a" style="left:1266px;top:145px;width:4px;height:14px;background:#2b2623;border-radius:2px"></div>
<div class="a" style="left:1304px;top:145px;width:4px;height:12px;background:#2b2623;border-radius:2px"></div>
<div class="a" style="left:1276px;top:161px;width:9px;height:3px;background:#6d5448;border-radius:2px"></div>
<div class="a" style="left:1291px;top:161px;width:9px;height:3px;background:#6d5448;border-radius:2px"></div>
<div class="a" style="left:1280px;top:180px;width:14px;height:4px;background:#6e4f48;border-radius:2px"></div>
</div></div>
<div class="a" style="left:1211px;top:195px;width:82px;height:18px;background:rgba(38,38,38,0.78)"></div>
<div class="t" style="left:1215.30px;top:198.67px;font:400 11.73px/11.73px 'Liberation Sans',sans-serif;color:#f4f4f4;transform:scaleX(1.0216);transform-origin:0 0;">Лірук Дмитро</div>
<div class="a" style="left:1211px;top:218px;width:149px;height:84px;background:#262626"></div>
<div class="a" style="left:1244px;top:218px;width:82px;height:84px;overflow:hidden"><div class="a" style="left:-1244px;top:-218px;width:1429px;height:804px;filter:blur(1.3px)">
<div class="a" style="left:1244px;top:218px;width:82px;height:84px;background:linear-gradient(180deg,#cfc7c0,#c2b8b0)"></div>
<div class="a" style="left:1253px;top:220px;width:62px;height:56px;background:#d9a684;border-radius:50% 50% 35% 35%"></div>
<div class="a" style="left:1260px;top:236px;width:46px;height:48px;background:#e4b8a6;border-radius:40% 40% 48% 48%"></div>
<div class="a" style="left:1258px;top:226px;width:52px;height:19px;background:#dea888;border-radius:50% 50% 20% 30%"></div>
<div class="a" style="left:1268px;top:257px;width:9px;height:3px;background:#9a7468;border-radius:2px"></div>
<div class="a" style="left:1288px;top:257px;width:9px;height:3px;background:#9a7468;border-radius:2px"></div>
<div class="a" style="left:1274px;top:275px;width:18px;height:4px;background:#b86c6c;border-radius:2px"></div>
<div class="a" style="left:1256px;top:291px;width:60px;height:11px;background:#8a3e3e;border-radius:12px 12px 0 0"></div>
</div></div>
<div class="a" style="left:1211px;top:284px;width:125px;height:18px;background:rgba(28,28,28,0.92)"></div>
<svg class="a" style="left:1215px;top:287px;" width="13" height="13" viewBox="0 0 13 13"><rect x="4" y="0.8" width="4.5" height="7.5" rx="2.2" fill="#e0454f"/><path d="M2 6 C2 10.5 10.5 10.5 10.5 6 M6.25 9.7 V12 M3.8 12 H8.7" stroke="#e0454f" stroke-width="1.1" fill="none"/><path d="M0.8 12.2 L12 1" stroke="#e0454f" stroke-width="1.4"/></svg>
<div class="t" style="left:1232.00px;top:287.37px;font:400 11.73px/11.73px 'Liberation Sans',sans-serif;color:#f0f0f0;transform:scaleX(0.9748);transform-origin:0 0;">Катерина Волощук</div>
<div class="a" style="left:1211px;top:307px;width:149px;height:84px;overflow:hidden"><div class="a" style="left:-1211px;top:-307px;width:1429px;height:804px;filter:blur(1.8px)">
<div class="a" style="left:1211px;top:307px;width:149px;height:84px;background:linear-gradient(180deg,#c0cfd6 0,#bccbd2 22%,#8a96a0 34%,#6e7882 55%,#6a747e 100%)"></div>
<div class="a" style="left:1211px;top:335px;width:40px;height:56px;background:#4a4a52"></div>
<div class="a" style="left:1305px;top:335px;width:55px;height:56px;background:linear-gradient(90deg,#6e7c88,#8a9aa6 60%,#a4b6be)"></div>
<div class="a" style="left:1320px;top:345px;width:25px;height:30px;background:#5c6a78"></div>
<div class="a" style="left:1250px;top:338px;width:54px;height:53px;background:#a88a7a;border-radius:35% 35% 20% 20%"></div>
<div class="a" style="left:1247px;top:312px;width:64px;height:40px;background:#b38c6a;border-radius:50% 50% 30% 30%"></div>
<div class="a" style="left:1262px;top:318px;width:36px;height:14px;background:#c49c78;border-radius:50%"></div>
<div class="a" style="left:1255px;top:354px;width:23px;height:7px;background:#5a4a44;border-radius:3px;opacity:0.8"></div>
<div class="a" style="left:1281px;top:354px;width:22px;height:7px;background:#5a4a44;border-radius:3px;opacity:0.8"></div>
<div class="a" style="left:1243px;top:365px;width:22px;height:26px;background:#b09484;border-radius:8px"></div>
</div></div>
<div class="a" style="left:1211px;top:373px;width:108px;height:18px;background:rgba(40,40,40,0.72)"></div>
<svg class="a" style="left:1215px;top:376px;" width="13" height="13" viewBox="0 0 13 13"><rect x="4" y="0.8" width="4.5" height="7.5" rx="2.2" fill="#e0454f"/><path d="M2 6 C2 10.5 10.5 10.5 10.5 6 M6.25 9.7 V12 M3.8 12 H8.7" stroke="#e0454f" stroke-width="1.1" fill="none"/><path d="M0.8 12.2 L12 1" stroke="#e0454f" stroke-width="1.4"/></svg>
<div class="t" style="left:1232.00px;top:376.37px;font:400 11.73px/11.73px 'Liberation Sans',sans-serif;color:#f0f0f0;transform:scaleX(1.0161);transform-origin:0 0;">Марія Григорак</div>
<div class="a" style="left:1211px;top:397px;width:149px;height:84px;overflow:hidden"><div class="a" style="left:-1211px;top:-397px;width:1429px;height:804px;filter:blur(1.8px)">
<div class="a" style="left:1211px;top:397px;width:149px;height:84px;background:linear-gradient(180deg,#8e9084 0,#7e8278 12%,#44505a 22%,#303c46 45%,#2e3a44 100%)"></div>
<div class="a" style="left:1250px;top:431px;width:64px;height:31px;background:linear-gradient(90deg,#9ccaee 0,#6aa6e0 30%,#3e80c8 70%,#3872b8 100%)"></div>
<div class="a" style="left:1331px;top:410px;width:29px;height:52px;background:linear-gradient(180deg,#2a4a70,#1c4c88)"></div>
<div class="a" style="left:1256px;top:462px;width:64px;height:19px;background:#55504e;border-radius:12px 12px 0 0"></div>
<div class="a" style="left:1274px;top:436px;width:25px;height:27px;background:#e0c0b0;border-radius:40% 40% 48% 48%"></div>
<div class="a" style="left:1268px;top:427px;width:36px;height:18px;background:#dccaa2;border-radius:50% 50% 25% 25%"></div>
<div class="a" style="left:1268px;top:438px;width:7px;height:18px;background:#d8c49c;border-radius:3px 3px 8px 8px"></div>
<div class="a" style="left:1298px;top:438px;width:6px;height:16px;background:#d8c49c;border-radius:3px 3px 8px 8px"></div>
</div></div>
<div class="a" style="left:1211px;top:463px;width:149px;height:18px;background:rgba(40,40,40,0.72)"></div>
<svg class="a" style="left:1215px;top:466px;" width="13" height="13" viewBox="0 0 13 13"><rect x="4" y="0.8" width="4.5" height="7.5" rx="2.2" fill="#e0454f"/><path d="M2 6 C2 10.5 10.5 10.5 10.5 6 M6.25 9.7 V12 M3.8 12 H8.7" stroke="#e0454f" stroke-width="1.1" fill="none"/><path d="M0.8 12.2 L12 1" stroke="#e0454f" stroke-width="1.4"/></svg>
<div class="t" style="left:1232.00px;top:466.37px;font:400 11.73px/11.73px 'Liberation Sans',sans-serif;color:#f0f0f0;transform:scaleX(0.9239);transform-origin:0 0;">Лифар Владислава Віт...</div>
<div class="a" style="left:1211px;top:486px;width:149px;height:84px;overflow:hidden"><div class="a" style="left:-1211px;top:-486px;width:1429px;height:804px;filter:blur(0.8px)">
<div class="a" style="left:1211px;top:486px;width:149px;height:84px;background:linear-gradient(180deg,#eef0f3 0,#e6e9ed 20%,#dfe3e8 24%,#d5d9de 100%)"></div>
<div class="a" style="left:1262px;top:498px;width:30px;height:3px;background:#5a6270"></div>
<div class="a" style="left:1330px;top:499px;width:12px;height:4px;background:#ffffff;border-radius:50%"></div>
<div class="a" style="left:1211px;top:506px;width:149px;height:2px;background:#c8ccd2"></div>
<div class="a" style="left:1211px;top:508px;width:36px;height:32px;background:#e4e7ea"></div>
<div class="a" style="left:1229px;top:510px;width:16px;height:24px;background:#f4f6f8"></div>
<div class="a" style="left:1247px;top:507px;width:89px;height:34px;background:#1f3a8a"></div>
<div class="a" style="left:1276px;top:519px;width:22.5px;height:13px;background:#2c6fd6"></div>
<div class="a" style="left:1281px;top:522px;width:12px;height:6px;background:#a5c8f0"></div>
<div class="a" style="left:1306px;top:510px;width:5px;height:30px;background:#2848a8"></div>
<div class="a" style="left:1312px;top:510px;width:5px;height:30px;background:#3454b0"></div>
<div class="a" style="left:1319px;top:510px;width:4px;height:30px;background:#f0f0f2"></div>
<div class="a" style="left:1336px;top:508px;width:24px;height:34px;background:#e8ebee"></div>
<div class="a" style="left:1350px;top:520px;width:8px;height:25px;background:#243a70"></div>
<div class="a" style="left:1325px;top:525px;width:11px;height:15px;background:#d8e4ef"></div>
<div class="a" style="left:1211px;top:538px;width:16px;height:10px;background:#8a8a8a"></div>
<div class="a" style="left:1240px;top:528px;width:9px;height:14px;background:#c8b0c0;border-radius:40% 40% 0 0"></div>
<div class="a" style="left:1242px;top:522px;width:5px;height:6px;background:#c89c80;border-radius:50%"></div>
<div class="a" style="left:1259px;top:528px;width:9px;height:14px;background:#2e2e32;border-radius:40% 40% 0 0"></div>
<div class="a" style="left:1261px;top:522px;width:5px;height:6px;background:#c89c80;border-radius:50%"></div>
<div class="a" style="left:1269px;top:528px;width:9px;height:14px;background:#f0f0f0;border-radius:40% 40% 0 0"></div>
<div class="a" style="left:1271px;top:522px;width:5px;height:6px;background:#c89c80;border-radius:50%"></div>
<div class="a" style="left:1293px;top:528px;width:9px;height:14px;background:#f4f4f4;border-radius:40% 40% 0 0"></div>
<div class="a" style="left:1295px;top:522px;width:5px;height:6px;background:#c89c80;border-radius:50%"></div>
<div class="a" style="left:1312px;top:528px;width:9px;height:14px;background:#3a3a40;border-radius:40% 40% 0 0"></div>
<div class="a" style="left:1314px;top:522px;width:5px;height:6px;background:#c89c80;border-radius:50%"></div>
<div class="a" style="left:1324px;top:528px;width:9px;height:14px;background:#2a2a2a;border-radius:40% 40% 0 0"></div>
<div class="a" style="left:1326px;top:522px;width:5px;height:6px;background:#c89c80;border-radius:50%"></div>
<div class="a" style="left:1211px;top:540px;width:149px;height:30px;background:linear-gradient(180deg,#e2ddd2,#cfc9bd)"></div>
<div class="a" style="left:1222px;top:541px;width:120px;height:6px;background:#ece8e0"></div>
<div class="a" style="left:1253px;top:536px;width:12px;height:8px;background:#a0a4ac"></div>
<div class="a" style="left:1280px;top:538px;width:14px;height:9px;background:#262a32"></div>
<div class="a" style="left:1302px;top:537px;width:15px;height:10px;background:#3a3e48"></div>
<div class="a" style="left:1300px;top:533px;width:3px;height:7px;background:#f2d21a"></div>
<div class="a" style="left:1262px;top:544px;width:20px;height:4px;background:#e6e6e6"></div>
<div class="a" style="left:1216px;top:550px;width:2px;height:20px;background:#6a6a6a"></div>
<div class="a" style="left:1354px;top:550px;width:2px;height:20px;background:#6a6a6a"></div>
</div></div>
<div class="a" style="left:1211px;top:552px;width:149px;height:18px;background:rgba(40,40,40,0.55)"></div>
<div class="t" style="left:1215.50px;top:555.37px;font:400 11.73px/11.73px 'Liberation Sans',sans-serif;color:#f0f0f0;transform:scaleX(0.9569);transform-origin:0 0;">НУ «Запорізька політехні...</div>
<div class="a" style="left:1211px;top:575px;width:149px;height:84px;overflow:hidden"><div class="a" style="left:-1211px;top:-575px;width:1429px;height:804px;filter:blur(1.4px)">
<div class="a" style="left:1211px;top:575px;width:149px;height:84px;background:#0f1216"></div>
<div class="a" style="left:1211px;top:575px;width:46px;height:84px;background:linear-gradient(90deg,#a8c4d6 0,#9cbccf 10%,#b9d2de 40%,#aac8d8 100%)"></div>
<div class="a" style="left:1227px;top:575px;width:2px;height:84px;background:#8fb0c4"></div>
<div class="a" style="left:1266px;top:606px;width:68px;height:53px;background:#c29a8c;border-radius:30% 30% 20% 20%"></div>
<div class="a" style="left:1258px;top:577px;width:82px;height:38px;background:radial-gradient(ellipse 36px 16px at 44px 18px,#d4d4d4,#9a9a9a);border-radius:50% 50% 35% 35%"></div>
<div class="a" style="left:1258px;top:600px;width:9px;height:28px;background:#8a8a8a;border-radius:3px 3px 6px 6px"></div>
<div class="a" style="left:1332px;top:600px;width:8px;height:22px;background:#9a9a9a;border-radius:3px"></div>
<div class="a" style="left:1280px;top:616px;width:44px;height:8px;background:#d0a898;border-radius:40%"></div>
<div class="a" style="left:1283px;top:640px;width:28px;height:8px;border:1.4px solid #1e1a1a;border-radius:3px"></div>
<div class="a" style="left:1314px;top:640px;width:28px;height:8px;border:1.4px solid #1e1a1a;border-radius:3px"></div>
<div class="a" style="left:1325px;top:646px;width:18px;height:13px;background:#d86a78;opacity:0.55;border-radius:5px"></div>
<div class="a" style="left:1338px;top:648px;width:22px;height:11px;background:#6d7c92"></div>
<div class="a" style="left:1258px;top:622px;width:6px;height:16px;background:#20201e"></div>
</div></div>
<div class="a" style="left:1211px;top:641px;width:107px;height:18px;background:rgba(40,40,40,0.65)"></div>
<div class="t" style="left:1215.00px;top:644.37px;font:400 11.73px/11.73px 'Liberation Sans',sans-serif;color:#f0f0f0;">Volodymyr Sysoiev</div>
<div class="a" style="left:1250px;top:665px;width:69px;height:31px;background:#111111;border-radius:6px"></div>
<svg class="a" style="left:1277px;top:676px;" width="16" height="9" viewBox="0 0 16 9"><path d="M1 1 L8 7.5 L15 1" stroke="#b9b9c8" stroke-width="1.8" fill="none"/></svg>
<div class="a" style="left:0px;top:710px;width:1429px;height:58px;background:#1a1a1a"></div>
<svg class="a" style="left:38px;top:724px;" width="22" height="23" viewBox="0 0 22 23"><rect x="6.5" y="1" width="8" height="13" rx="4" fill="#a9a9a9"/><path d="M4 10 C4 17 17 17 17 10 M10.5 16 V20.5 M7 21 H14" stroke="#a9a9a9" stroke-width="1.6" fill="none"/><path d="M1 22 L21 1.5" stroke="#1a1a1a" stroke-width="4"/><path d="M1 22 L21 1.5" stroke="#e5484d" stroke-width="1.7"/></svg>
<svg class="a" style="left:79px;top:733px;" width="8" height="5" viewBox="0 0 8 5"><path d="M0.8 4.2 L4 1 L7.2 4.2" stroke="#a9a9a9" stroke-width="1.4" fill="none"/></svg>
<div class="t" style="left:10.20px;top:751.47px;font:400 11.73px/11.73px 'Liberation Sans',sans-serif;color:#c2c2c2;transform:scaleX(0.9918);transform-origin:0 0;">Включить звук</div>
<svg class="a" style="left:138px;top:724px;" width="25" height="23" viewBox="0 0 25 23"><rect x="1" y="5" width="15" height="13" rx="2.5" fill="#a9a9a9"/><path d="M17 9.5 L23.5 5.5 V17.5 L17 13.5 Z" fill="#a9a9a9"/><path d="M2.5 22 L22.5 1.5" stroke="#1a1a1a" stroke-width="4"/><path d="M2.5 22 L22.5 1.5" stroke="#e5484d" stroke-width="1.7"/></svg>
<svg class="a" style="left:190px;top:733px;" width="8" height="5" viewBox="0 0 8 5"><path d="M0.8 4.2 L4 1 L7.2 4.2" stroke="#a9a9a9" stroke-width="1.4" fill="none"/></svg>
<div class="t" style="left:114.70px;top:751.47px;font:400 11.73px/11.73px 'Liberation Sans',sans-serif;color:#c2c2c2;transform:scaleX(0.9471);transform-origin:0 0;">Начать видео</div>
<svg class="a" style="left:351px;top:726px;" width="25" height="19" viewBox="0 0 25 19"><circle cx="8" cy="5.2" r="3.8" fill="#a9a9a9"/><circle cx="17" cy="6.8" r="3.4" fill="#a9a9a9"/><path d="M1 14.5 C1 11.5 4 10.8 8 10.8 C12 10.8 15 11.5 15 14.5 C15 17 13.5 18 11.5 18 H4.5 C2.5 18 1 17 1 14.5 Z" fill="#a9a9a9"/><path d="M16.8 12 C20.5 12 23.8 12.8 23.8 15.5 C23.8 17.2 22.8 18 21 18 H16 C16.8 17 17 16 17 14.5 C17 13.5 16.9 12.8 16.8 12 Z" fill="#a9a9a9"/></svg>
<div class="t" style="left:378.80px;top:727.60px;font:400 12.29px/12.29px 'Liberation Sans',sans-serif;color:#c2c2c2;transform:scaleX(0.8558);transform-origin:0 0;">34</div>
<svg class="a" style="left:408px;top:733px;" width="8" height="5" viewBox="0 0 8 5"><path d="M0.8 4.2 L4 1 L7.2 4.2" stroke="#a9a9a9" stroke-width="1.4" fill="none"/></svg>
<div class="t" style="left:336.00px;top:751.47px;font:400 11.73px/11.73px 'Liberation Sans',sans-serif;color:#c2c2c2;transform:scaleX(0.9724);transform-origin:0 0;">Участники</div>
<svg class="a" style="left:456px;top:726px;" width="20" height="18" viewBox="0 0 20 18"><path d="M3.5 0.5 H16.5 C18.5 0.5 19.5 1.5 19.5 3.5 V10.5 C19.5 12.5 18.5 13.5 16.5 13.5 H9 L4 17.5 V13.5 H3.5 C1.5 13.5 0.5 12.5 0.5 10.5 V3.5 C0.5 1.5 1.5 0.5 3.5 0.5 Z" fill="#a9a9a9"/></svg>
<svg class="a" style="left:492px;top:733px;" width="8" height="5" viewBox="0 0 8 5"><path d="M0.8 4.2 L4 1 L7.2 4.2" stroke="#a9a9a9" stroke-width="1.4" fill="none"/></svg>
<div class="t" style="left:457.00px;top:751.47px;font:400 11.73px/11.73px 'Liberation Sans',sans-serif;color:#c2c2c2;transform:scaleX(0.9147);transform-origin:0 0;">Чат</div>
<div class="a" style="left:562px;top:727px;width:23px;height:17px;background:#23d45b;border-radius:3.5px"></div>
<svg class="a" style="left:568px;top:729.5px;" width="11" height="12" viewBox="0 0 11 12"><path d="M5.5 10.5 V2 M1.5 5.5 L5.5 1.5 L9.5 5.5" stroke="#111" stroke-width="1.8" fill="none"/></svg>
<div class="t" style="left:516.00px;top:751.47px;font:400 11.73px/11.73px 'Liberation Sans',sans-serif;color:#27d35e;transform:scaleX(0.9676);transform-origin:0 0;">Демонстрация экрана</div>
<svg class="a" style="left:668px;top:726px;" width="20" height="20" viewBox="0 0 20 20"><path d="M3 0.5 H12 L19.5 7.5 V17 C19.5 18.5 18.5 19.5 17 19.5 H3 C1.5 19.5 0.5 18.5 0.5 17 V3 C0.5 1.5 1.5 0.5 3 0.5 Z" fill="#a9a9a9"/><path d="M12 0.5 V6 C12 7 12.5 7.5 13.5 7.5 H19.5" fill="#1a1a1a"/><path d="M9.5 9 L10.5 12 L13.5 13 L10.5 14 L9.5 17 L8.5 14 L5.5 13 L8.5 12 Z" fill="#1a1a1a"/><circle cx="13.5" cy="9.5" r="1" fill="#1a1a1a"/></svg>
<div class="t" style="left:657.80px;top:751.47px;font:400 11.73px/11.73px 'Liberation Sans',sans-serif;color:#c2c2c2;transform:scaleX(0.9393);transform-origin:0 0;">Сводка</div>
<svg class="a" style="left:745px;top:723px;" width="25" height="25" viewBox="0 0 25 25"><path d="M11.8 2.6 Q13.3 11.5 22.4 13.4 Q13.3 15.3 11.8 24 Q10.3 15.3 1 13.4 Q10.3 11.5 11.8 2.6 Z" fill="#a9a9a9"/><path d="M20 1.2 Q20.6 4.3 23.7 5 Q20.6 5.7 20 8.8 Q19.4 5.7 16.3 5 Q19.4 4.3 20 1.2 Z" fill="#a9a9a9"/></svg>
<div class="t" style="left:722.40px;top:751.47px;font:400 11.73px/11.73px 'Liberation Sans',sans-serif;color:#c2c2c2;transform:scaleX(0.9604);transform-origin:0 0;">AI Companion</div>
<svg class="a" style="left:828px;top:726px;" width="21" height="21" viewBox="0 0 21 21"><circle cx="10.5" cy="10.5" r="9.3" stroke="#a9a9a9" stroke-width="1.8" fill="none"/><circle cx="10.5" cy="10.5" r="7" fill="#a9a9a9"/></svg>
<div class="t" style="left:820.40px;top:751.47px;font:400 11.73px/11.73px 'Liberation Sans',sans-serif;color:#c2c2c2;transform:scaleX(0.9300);transform-origin:0 0;">Запись</div>
<svg class="a" style="left:904px;top:723px;" width="28" height="24" viewBox="0 0 28 24"><circle cx="10.3" cy="13.2" r="8.8" fill="#a9a9a9"/><circle cx="7.4" cy="11.6" r="1.2" fill="#1a1a1a"/><circle cx="13.2" cy="11.6" r="1.2" fill="#1a1a1a"/><path d="M6.6 14.6 C8 17.2 12.6 17.2 14 14.6" stroke="#1a1a1a" stroke-width="1.3" fill="none"/><circle cx="20" cy="5" r="4.6" fill="#1a1a1a"/><path d="M20 1.2 V8 M16.6 4.6 H23.4" stroke="#a9a9a9" stroke-width="1.5"/></svg>
<svg class="a" style="left:935px;top:733px;" width="8" height="5" viewBox="0 0 8 5"><path d="M0.8 4.2 L4 1 L7.2 4.2" stroke="#a9a9a9" stroke-width="1.4" fill="none"/></svg>
<div class="t" style="left:891.20px;top:751.47px;font:400 11.73px/11.73px 'Liberation Sans',sans-serif;color:#c2c2c2;transform:scaleX(0.9665);transform-origin:0 0;">Реакции</div>
<svg class="a" style="left:984px;top:728px;" width="17" height="17" viewBox="0 0 17 17"><path d="M1 6 V3 C1 2 2 1 3 1 H6.5 M1 10.5 V13.5 C1 14.5 2 15.5 3 15.5 H6 M10.5 15.5 H13 C14 15.5 15 14.5 15 13.5 V9.5" stroke="#a9a9a9" stroke-width="1.6" fill="none"/><circle cx="12.8" cy="3.6" r="2.6" stroke="#a9a9a9" stroke-width="1.5" fill="none"/><circle cx="3.2" cy="13.4" r="2.3" stroke="#a9a9a9" stroke-width="1.4" fill="none"/></svg>
<div class="t" style="left:958.00px;top:751.47px;font:400 11.73px/11.73px 'Liberation Sans',sans-serif;color:#c2c2c2;transform:scaleX(0.9907);transform-origin:0 0;">Приложения</div>
<svg class="a" style="left:1080px;top:726px;" width="20" height="17" viewBox="0 0 20 17"><path d="M4 13.5 H3 C1.8 13.5 1 12.7 1 11.5 V3 C1 1.8 1.8 1 3 1 H16 C17.2 1 18 1.8 18 3 V10" stroke="#a9a9a9" stroke-width="1.6" fill="none"/><rect x="7" y="12" width="12.5" height="4" rx="2" fill="#a9a9a9"/></svg>
<div class="t" style="left:1041.00px;top:751.47px;font:400 11.73px/11.73px 'Liberation Sans',sans-serif;color:#c2c2c2;">Доски сообщений</div>
<svg class="a" style="left:1182px;top:726px;" width="19" height="20" viewBox="0 0 19 20"><path d="M4 1 H12.5 C13.8 1 14.5 1.8 14.5 3 V12 M4 1 C2.8 1 2 1.8 2 3 V16 C2 17.2 2.8 18 4 18 H6" stroke="#a9a9a9" stroke-width="1.6" fill="none"/><path d="M5.5 5 H11 M5.5 8 H11 M5.5 11 H9" stroke="#a9a9a9" stroke-width="1.4"/><path d="M0.5 4 H2.5 M0.5 7 H2.5 M0.5 10 H2.5 M0.5 13 H2.5" stroke="#a9a9a9" stroke-width="1"/><rect x="8" y="15" width="10.5" height="4" rx="2" fill="#a9a9a9"/></svg>
<div class="t" style="left:1158.00px;top:751.47px;font:400 11.73px/11.73px 'Liberation Sans',sans-serif;color:#c2c2c2;transform:scaleX(0.9892);transform-origin:0 0;">Примечания</div>
<div class="a" style="left:1361px;top:731px;width:57px;height:25px;background:#c0272d;border-radius:6px"></div>
<div class="t" style="left:1372.75px;top:738.13px;font:700 12.01px/12.01px 'Liberation Sans',sans-serif;color:#fff;transform:scaleX(0.8463);transform-origin:0 0;">Выйти</div>
<div class="a" style="left:0px;top:768px;width:1429px;height:36px;background:linear-gradient(90deg,#2c282a 0,#3a3232 60px,#4a3e3a 110px,#514540 200px,#4a3e3a 300px,#3a3034 400px,#372d34 560px,#3a2e38 700px,#352a32 900px,#30262c 1100px,#2c2428 1429px)"></div>
<svg class="a" style="left:0px;top:768px;" width="1429" height="36" viewBox="0 0 1429 36"><defs><filter id="tb" x="-20%" y="-50%" width="140%" height="200%"><feGaussianBlur stdDeviation="2.2"/></filter></defs><g filter="url(#tb)"><path d="M95 22 C140 12 220 8 300 14 C320 18 330 26 320 34 C240 36 150 34 95 30 Z" fill="#7a6a5e" opacity="0.75"/><path d="M110 10 C150 4 200 6 230 14 C200 22 150 22 110 18 Z" fill="#8a7a6a" opacity="0.6"/><path d="M570 28 C590 16 610 12 640 18 C670 24 690 30 692 36 H575 Z" fill="#958574" opacity="0.7"/><path d="M722 14 C740 8 770 12 800 13 C830 8 860 0 890 6 C905 14 912 28 912 36 H860 C840 26 800 22 760 22 C740 22 725 20 722 14 Z" fill="#9a8a7a" opacity="0.75"/><path d="M955 4 C980 0 1010 2 1040 20 C1050 28 1056 34 1056 36 H1010 C995 24 970 14 955 10 Z" fill="#a09080" opacity="0.75"/><path d="M960 14 C980 12 1000 18 1010 24 C990 26 970 22 960 18 Z" fill="#b0a090" opacity="0.6"/><path d="M1160 26 C1190 22 1230 24 1260 30 V36 H1160 Z" fill="#6a5a56" opacity="0.7"/><path d="M900 30 C905 28 912 30 914 36 H898 Z" fill="#9a8a78" opacity="0.7"/></g></svg>
<div class="a" style="left:0px;top:768px;width:1429px;height:1.5px;background:#7d7878"></div>
<div class="a" style="left:9px;top:770px;width:32px;height:32px;border-radius:50%;background:radial-gradient(ellipse 14px 7px at 16px 27px,rgba(120,220,255,0.9),rgba(0,0,0,0)),radial-gradient(circle at 50% 35%,#5aa8d8 0,#2a78b0 40%,#124a78 75%,#0d3350 100%);box-shadow:0 0 0 1px rgba(20,30,40,0.8)"></div>
<div class="a" style="left:12px;top:771px;width:26px;height:13px;border-radius:50% 50% 40% 40%;background:linear-gradient(180deg,rgba(255,255,255,0.45),rgba(255,255,255,0.05))"></div>
<svg class="a" style="left:15px;top:775px;" width="20" height="20" viewBox="0 0 20 20"><path d="M1.5 3.5 C4 2.2 7 2.2 9.5 3.6 L8.3 8.8 C5.8 7.6 3.3 7.6 0.3 8.8 Z" fill="#f25022"/><path d="M10.6 3.9 C13 5.2 16 5.2 19.5 4 L18.3 9.4 C15 10.5 12.3 10 9.4 9 Z" fill="#7fba00"/><path d="M0.1 9.8 C3 8.6 5.6 8.6 8.1 9.8 L6.9 15 C4.4 13.8 1.9 13.8 -1.1 15 Z" fill="#00a4ef"/><path d="M9.2 10.1 C12 11.2 14.8 11.6 18.1 10.4 L16.9 15.8 C13.6 17 11 16.5 8 15.3 Z" fill="#ffb900"/></svg>
<svg class="a" style="left:64px;top:771px;" width="29" height="30" viewBox="0 0 29 30"><path d="M2 17 L15 6 L27 17 L14 28 Z" fill="#2a66c9" stroke="#143a80" stroke-width="1"/><path d="M4 18 L15 9 L25 17 L14 26 Z" fill="#5a9ae6"/><circle cx="13" cy="10" r="7" fill="#c8c0e8" stroke="#6a6aa8" stroke-width="1.4"/><circle cx="11.5" cy="8.5" r="3" fill="#f0ecff"/><path d="M17 15 L24 24" stroke="#d83a2a" stroke-width="3.4" stroke-linecap="round"/></svg>
<svg class="a" style="left:115px;top:771px;" width="30" height="30" viewBox="0 0 30 30"><path d="M7.5 16 H23.5 C23.5 10.5 20 7 15.3 7 C10.3 7 7 11 7 16 C7 21 10.5 24.5 15.3 24.5 C18.8 24.5 21.5 23 23 20.5" stroke="#2ea3e6" stroke-width="4.6" fill="none"/><path d="M9.5 14 H21" stroke="#8fd3f7" stroke-width="1"/><path d="M4 27 C0 23 8 10 18 5 C25 1.5 30 2 28 7.5 C27 10 25 12 23.5 13" stroke="#f2b71c" stroke-width="2.2" fill="none"/></svg>
<svg class="a" style="left:168px;top:772px;" width="30" height="29" viewBox="0 0 30 29"><path d="M1 4 H11 L13 6.5 H29 V26 H1 Z" fill="#e8c060"/><rect x="4" y="2" width="22" height="9" fill="#fff"/><rect x="6" y="3" width="3" height="2" fill="#3a9a3a"/><rect x="14" y="3" width="3" height="2" fill="#d03030"/><rect x="20" y="4" width="3" height="2" fill="#2a6ad0"/><rect x="1" y="9" width="28" height="17" fill="#f6dc86"/><path d="M6 26 V19 C6 17.5 7 17 8 17 H22 C23 17 24 17.5 24 19 V26 H19 V21.5 H11 V26 Z" fill="#6ab0e0"/><rect x="1" y="26" width="28" height="2.5" fill="#d8b04a"/></svg>
<svg class="a" style="left:220px;top:771px;" width="25" height="30" viewBox="0 0 25 30"><rect x="3" y="1" width="21" height="27" fill="#9cc8e8" stroke="#5a90c0" stroke-width="1"/><rect x="0.5" y="3" width="21" height="26" fill="#b8dcf4" stroke="#6aa0d0" stroke-width="1"/><circle cx="11" cy="16" r="7.5" fill="#f07a1a"/><path d="M9 12 L15.5 16 L9 20 Z" fill="#fff"/></svg>
<svg class="a" style="left:272.5px;top:771.5px;" width="29.0" height="29.0" viewBox="0 0 29.0 29.0"><circle cx="14.5" cy="14.5" r="14.5" fill="#db4437"/><path d="M14.5 14.5 L27.06 7.25 A14.5 14.5 0 0 1 14.50 29.0 Z" fill="#f4c20d"/><path d="M14.5 14.5 L14.5 29.0 A14.5 14.5 0 0 1 1.94 7.25 Z" fill="#0f9d58"/><circle cx="14.5" cy="14.5" r="6.67" fill="#fff"/><circle cx="14.5" cy="14.5" r="5.22" fill="#4285f4"/></svg>
<div class="a" style="left:314px;top:769px;width:49px;height:35px;border:1px solid rgba(200,200,200,0.45);border-radius:3px;background:linear-gradient(180deg,rgba(255,255,255,0.22),rgba(255,255,255,0.06) 50%,rgba(255,255,255,0.02))"></div>
<div class="a" style="left:366px;top:769px;width:49px;height:35px;border:1px solid rgba(200,200,200,0.45);border-radius:3px;background:linear-gradient(180deg,rgba(255,255,255,0.22),rgba(255,255,255,0.06) 50%,rgba(255,255,255,0.02))"></div>
<div class="a" style="left:470px;top:769px;width:49px;height:35px;border:1px solid rgba(200,200,200,0.45);border-radius:3px;background:linear-gradient(180deg,rgba(255,255,255,0.22),rgba(255,255,255,0.06) 50%,rgba(255,255,255,0.02))"></div>
<div class="a" style="left:522px;top:769px;width:50px;height:35px;border:1px solid rgba(200,200,200,0.45);border-radius:3px;background:linear-gradient(180deg,rgba(255,255,255,0.22),rgba(255,255,255,0.06) 50%,rgba(255,255,255,0.02))"></div>
<svg class="a" style="left:323px;top:773px;" width="31" height="28" viewBox="0 0 31 28"><path d="M3 4 C8 0 12 1 14 2 L28 3 V26 L14 27 C10 28 6 27 3 24 Z" fill="#fff" stroke="#9ac08a" stroke-width="1"/><path d="M3 4 C8 0 12 1 14 2 V27 C10 28 6 27 3 24 Z" fill="#3d9a3d"/><path d="M6 9 L12 20 M12 9 L6 20" stroke="#fff" stroke-width="2.6"/><g fill="#4aa84a"><rect x="16" y="6" width="5" height="4"/><rect x="22" y="6" width="5" height="4"/><rect x="16" y="12" width="5" height="4"/><rect x="22" y="12" width="5" height="4"/><rect x="16" y="18" width="5" height="4"/><rect x="22" y="18" width="5" height="4"/></g></svg>
<svg class="a" style="left:376px;top:773px;" width="31" height="28" viewBox="0 0 31 28"><path d="M3 4 C8 0 12 1 14 2 L28 3 V26 L14 27 C10 28 6 27 3 24 Z" fill="#fff" stroke="#8aa8d8" stroke-width="1"/><path d="M3 4 C8 0 12 1 14 2 V27 C10 28 6 27 3 24 Z" fill="#3a78c8"/><text x="17" y="13" font-size="11" font-weight="700" font-style="italic" fill="#2a5ab0" font-family="Liberation Serif">W</text><g fill="#2a5ab0"><rect x="15" y="15" width="12" height="1.6"/><rect x="15" y="18.5" width="12" height="1.6"/><rect x="15" y="22" width="12" height="1.6"/></g></svg>
<svg class="a" style="left:427px;top:771px;" width="30" height="31" viewBox="0 0 30 31"><path d="M15 1.5 C23 1.5 28 6 28 13.5 C28 21 23 25 15 25 C13.5 25 12.5 25 11.5 24.5 L8 29 V23.5 C4 21.5 2 18 2 13.5 C2 6 7 1.5 15 1.5 Z" fill="#fff"/><path d="M15 4 C21.5 4 25.5 7.5 25.5 13.5 C25.5 19.5 21.5 22.5 15 22.5 C13.8 22.5 12.8 22.4 12 22 L10 24.5 V21 C6.5 19.5 4.5 17 4.5 13.5 C4.5 7.5 8.5 4 15 4 Z" fill="#7360f2"/><path d="M10.5 8.5 C9 9.5 9.5 12 11.5 14.5 C13.5 17 16 18.5 17.5 17.5 L18.5 16.5 L16.5 14.8 L15.3 15.6 C14.3 15 13 13.7 12.6 12.8 L13.4 11.5 L11.8 9.5 Z" fill="#fff"/><path d="M16 7.5 C18.5 7.8 20.5 9.5 20.8 12.3 M16 9.6 C17.5 9.8 18.6 10.8 18.8 12.3" stroke="#fff" stroke-width="1" fill="none"/></svg>
<svg class="a" style="left:479.5px;top:771.5px;" width="29.0" height="29.0" viewBox="0 0 29.0 29.0"><circle cx="14.5" cy="14.5" r="14.5" fill="#db4437"/><path d="M14.5 14.5 L27.06 7.25 A14.5 14.5 0 0 1 14.50 29.0 Z" fill="#f4c20d"/><path d="M14.5 14.5 L14.5 29.0 A14.5 14.5 0 0 1 1.94 7.25 Z" fill="#0f9d58"/><circle cx="14.5" cy="14.5" r="6.67" fill="#fff"/><circle cx="14.5" cy="14.5" r="5.22" fill="#4285f4"/></svg>
<div class="a" style="left:532.5px;top:772.5px;width:29px;height:29px;background:radial-gradient(circle at 50% 40%,#2d8cff,#0b5cff);border-radius:50%"></div>
<div class="t" style="left:537.50px;top:783.34px;font:700 7.28px/7.28px 'Liberation Sans',sans-serif;color:#fff;">zoom</div>
<div class="t" style="left:1202.50px;top:779.67px;font:400 10.20px/10.20px 'Liberation Sans',sans-serif;color:#e8e8e8;transform:scaleX(0.9743);transform-origin:0 0;">EN</div>
<svg class="a" style="left:1222.5px;top:776.5px;" width="14" height="14" viewBox="0 0 14 14"><circle cx="7" cy="7" r="6.6" fill="#1a3ad0" stroke="#c8d0f0" stroke-width="0.8"/><circle cx="7" cy="7" r="5" fill="#2e5af0"/><text x="7" y="10.5" font-size="9.5" font-weight="700" fill="#fff" text-anchor="middle" font-family="Liberation Sans">?</text></svg>
<svg class="a" style="left:1243px;top:777px;" width="8" height="15" viewBox="0 0 8 15"><rect x="1.5" y="0.5" width="5" height="3.5" stroke="#ddd" stroke-width="0.9" fill="none"/><rect x="0.5" y="2.5" width="5" height="3.5" stroke="#ddd" stroke-width="0.9" fill="#3a3030"/><path d="M1.5 11 H6.5 L4 14 Z" fill="#ddd"/></svg>
<svg class="a" style="left:1260px;top:785px;" width="9" height="5" viewBox="0 0 9 5"><path d="M0.5 4.5 L4.5 0.5 L8.5 4.5 Z" fill="#e8e8e8"/></svg>
<svg class="a" style="left:1280px;top:779px;" width="16" height="14" viewBox="0 0 16 14"><path d="M1 4.5 H4 L8.5 0.8 V13.2 L4 9.5 H1 Z" fill="#e8e8e8"/><path d="M10.5 4.5 Q12 7 10.5 9.5 M12.8 2.8 Q15.5 7 12.8 11.2" stroke="#e8e8e8" stroke-width="1" fill="none"/></svg>
<svg class="a" style="left:1303px;top:778px;" width="15" height="17" viewBox="0 0 15 17"><rect x="1" y="2.5" width="7" height="13.5" stroke="#e8e8e8" stroke-width="1.2" fill="none"/><rect x="3" y="0.8" width="3" height="2" fill="#e8e8e8"/><rect x="2.5" y="5" width="4" height="9.5" fill="#e8e8e8"/><path d="M10 4 V7 M13 4 V7 M9 7 H14 V10 C14 11.5 13 12 11.5 12 C10 12 9 11.5 9 10 Z M11.5 12 V16" stroke="#e8e8e8" stroke-width="1.1" fill="none"/></svg>
<svg class="a" style="left:1327px;top:783px;" width="12" height="10" viewBox="0 0 12 10"><rect x="0.0" y="7.2" width="1.6" height="2.8" fill="#e8e8e8"/><rect x="2.3" y="5.4" width="1.6" height="4.6" fill="#e8e8e8"/><rect x="4.6" y="3.6" width="1.6" height="6.4" fill="#e8e8e8"/><rect x="6.9" y="1.8" width="1.6" height="8.2" fill="#e8e8e8"/><rect x="9.2" y="0.0" width="1.6" height="10.0" fill="#e8e8e8"/></svg>
<div class="t" style="left:1369.40px;top:773.72px;font:400 11.31px/11.31px 'Liberation Sans',sans-serif;color:#f0f0f0;transform:scaleX(0.9184);transform-origin:0 0;">12:40</div>
<div class="t" style="left:1356.70px;top:789.82px;font:400 11.31px/11.31px 'Liberation Sans',sans-serif;color:#f0f0f0;transform:scaleX(0.9060);transform-origin:0 0;">12.06.2025</div>
<div class="a" style="left:1419px;top:769px;width:10px;height:35px;border:1px solid rgba(230,230,230,0.7);border-right:none;background:linear-gradient(180deg,rgba(255,255,255,0.35),rgba(255,255,255,0.15))"></div>
</body></html>
